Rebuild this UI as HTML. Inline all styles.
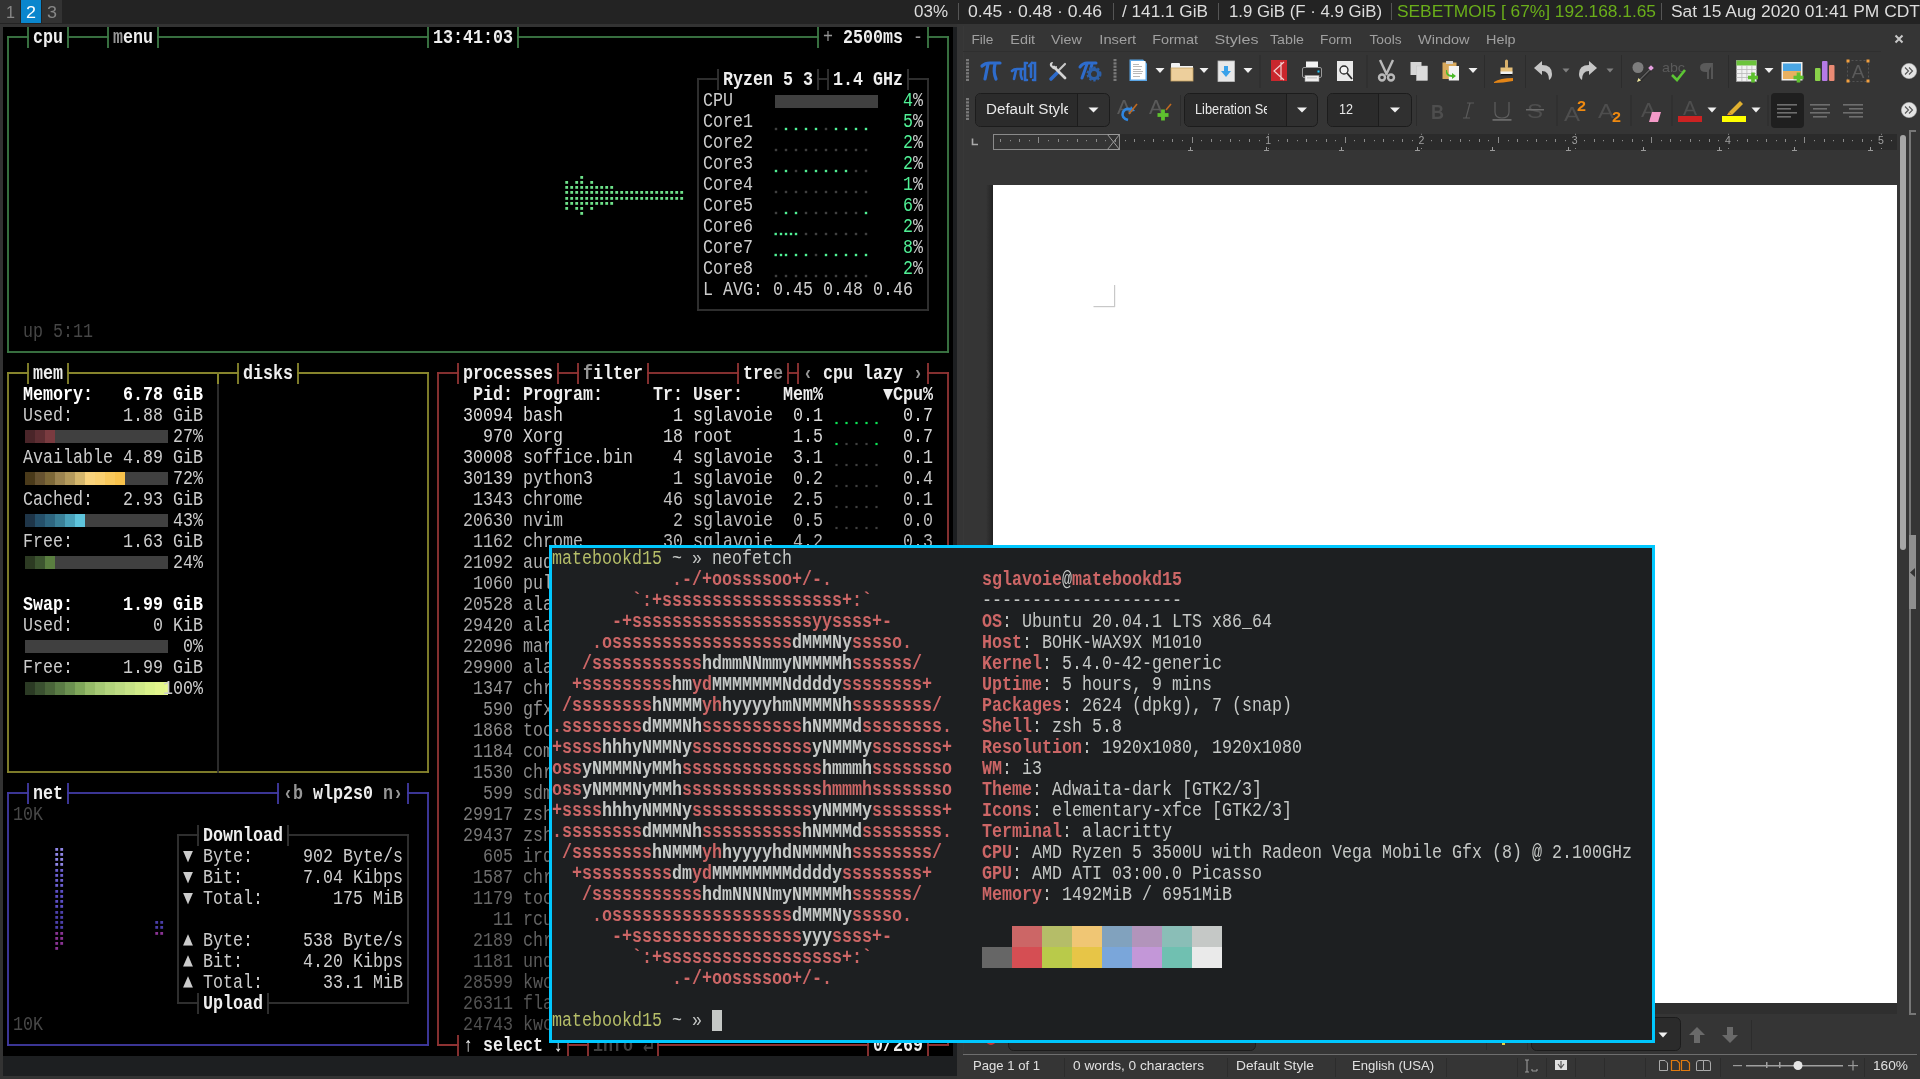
<!DOCTYPE html><html><head><meta charset="utf-8"><title>desktop</title><style>
html,body{margin:0;padding:0;background:#333;overflow:hidden;width:1920px;height:1079px}
svg{display:block;position:absolute;left:0;top:0;will-change:transform}
text{font-family:"Liberation Mono",monospace;white-space:pre}
.s{font-family:"Liberation Sans",sans-serif}
</style></head><body>
<svg width="1920" height="1079" viewBox="0 0 1920 1079">
<rect x="0" y="0" width="1920" height="1079" fill="#333333" />
<rect x="0" y="0" width="1920" height="24" fill="#232323" />
<rect x="0" y="0" width="20" height="23" fill="#333333" />
<rect x="21" y="0" width="20" height="23" fill="#0a86cd" />
<rect x="42" y="0" width="20" height="23" fill="#333333" />
<text class="s" x="6" y="18" fill="#888888" font-size="16" textLength="9" lengthAdjust="spacingAndGlyphs">1</text>
<text class="s" x="26" y="18" fill="#ffffff" font-size="16" textLength="10" lengthAdjust="spacingAndGlyphs">2</text>
<text class="s" x="47" y="18" fill="#888888" font-size="16" textLength="10" lengthAdjust="spacingAndGlyphs">3</text>
<text class="s" x="914" y="17" fill="#dddddd" font-size="16" textLength="34" lengthAdjust="spacingAndGlyphs">03%</text>
<text class="s" x="968" y="17" fill="#dddddd" font-size="16" textLength="134" lengthAdjust="spacingAndGlyphs">0.45 · 0.48 · 0.46</text>
<text class="s" x="1122" y="17" fill="#dddddd" font-size="16" textLength="86" lengthAdjust="spacingAndGlyphs">/ 141.1 GiB</text>
<text class="s" x="1229" y="17" fill="#dddddd" font-size="16" textLength="153" lengthAdjust="spacingAndGlyphs">1.9 GiB (F · 4.9 GiB)</text>
<text class="s" x="1397" y="17" fill="#6aae1a" font-size="16" textLength="259" lengthAdjust="spacingAndGlyphs">SEBETMOI5 [ 67%] 192.168.1.65</text>
<text class="s" x="1671" y="17" fill="#dddddd" font-size="16" textLength="249" lengthAdjust="spacingAndGlyphs">Sat 15 Aug 2020 01:41 PM CDT</text>
<rect x="958" y="3" width="1" height="17" fill="#555555" />
<rect x="1113" y="3" width="1" height="17" fill="#555555" />
<rect x="1218" y="3" width="1" height="17" fill="#555555" />
<rect x="1391" y="3" width="1" height="17" fill="#555555" />
<rect x="1661" y="3" width="1" height="17" fill="#555555" />
<rect x="3" y="27" width="954" height="1049" fill="#1d1f21" />
<rect x="3" y="27" width="950" height="1029" fill="#000000" />
<rect x="7.1" y="36.1" width="941.8" height="1.8" fill="#3d7b46" />
<rect x="7.1" y="351.1" width="941.8" height="1.8" fill="#3d7b46" />
<rect x="7.1" y="36.1" width="1.8" height="316.8" fill="#3d7b46" />
<rect x="947.1" y="36.1" width="1.8" height="316.8" fill="#3d7b46" />
<rect x="28.9" y="27" width="38.2" height="21" fill="#000" />
<rect x="27.1" y="27" width="1.8" height="21" fill="#3d7b46" />
<rect x="67.1" y="27" width="1.8" height="21" fill="#3d7b46" />
<text x="33" y="43" fill="#eeeeee" font-size="20" font-weight="bold" textLength="30" lengthAdjust="spacingAndGlyphs">cpu</text>
<rect x="108.9" y="27" width="48.2" height="21" fill="#000" />
<rect x="107.1" y="27" width="1.8" height="21" fill="#3d7b46" />
<rect x="157.1" y="27" width="1.8" height="21" fill="#3d7b46" />
<text x="113" y="43" fill="#969696" font-size="20" font-weight="bold" textLength="10" lengthAdjust="spacingAndGlyphs">m</text>
<text x="123" y="43" fill="#eeeeee" font-size="20" font-weight="bold" textLength="30" lengthAdjust="spacingAndGlyphs">enu</text>
<rect x="428.9" y="27" width="88.2" height="21" fill="#000" />
<rect x="427.1" y="27" width="1.8" height="21" fill="#3d7b46" />
<rect x="517.1" y="27" width="1.8" height="21" fill="#3d7b46" />
<text x="433" y="43" fill="#eeeeee" font-size="20" font-weight="bold" textLength="80" lengthAdjust="spacingAndGlyphs">13:41:03</text>
<rect x="818.9" y="27" width="108.2" height="21" fill="#000" />
<rect x="817.1" y="27" width="1.8" height="21" fill="#3d7b46" />
<rect x="927.1" y="27" width="1.8" height="21" fill="#3d7b46" />
<text x="823" y="43" fill="#969696" font-size="20" textLength="10" lengthAdjust="spacingAndGlyphs">+</text>
<text x="843" y="43" fill="#eeeeee" font-size="20" font-weight="bold" textLength="60" lengthAdjust="spacingAndGlyphs">2500ms</text>
<text x="913" y="43" fill="#969696" font-size="20" textLength="10" lengthAdjust="spacingAndGlyphs">-</text>
<text x="23" y="337" fill="#464646" font-size="20" textLength="20" lengthAdjust="spacingAndGlyphs">up</text>
<text x="53" y="337" fill="#464646" font-size="20" textLength="40" lengthAdjust="spacingAndGlyphs">5:11</text>
<rect x="580.3" y="176.0" width="2.8" height="2.8" fill="#6ee28a" />
<rect x="565.3" y="181.0" width="2.8" height="2.8" fill="#6ee28a" />
<rect x="575.3" y="181.0" width="2.8" height="2.8" fill="#6ee28a" />
<rect x="580.3" y="181.0" width="2.8" height="2.8" fill="#6ee28a" />
<rect x="590.3" y="181.0" width="2.8" height="2.8" fill="#6ee28a" />
<rect x="565.3" y="186.0" width="2.8" height="2.8" fill="#6ee28a" />
<rect x="570.3" y="186.0" width="2.8" height="2.8" fill="#6ee28a" />
<rect x="575.3" y="186.0" width="2.8" height="2.8" fill="#6ee28a" />
<rect x="580.3" y="186.0" width="2.8" height="2.8" fill="#6ee28a" />
<rect x="585.3" y="186.0" width="2.8" height="2.8" fill="#6ee28a" />
<rect x="590.3" y="186.0" width="2.8" height="2.8" fill="#6ee28a" />
<rect x="595.3" y="186.0" width="2.8" height="2.8" fill="#6ee28a" />
<rect x="600.3" y="186.0" width="2.8" height="2.8" fill="#6ee28a" />
<rect x="605.3" y="186.0" width="2.8" height="2.8" fill="#6ee28a" />
<rect x="610.3" y="186.0" width="2.8" height="2.8" fill="#6ee28a" />
<rect x="565.3" y="191.0" width="2.8" height="2.8" fill="#6ee28a" />
<rect x="570.3" y="191.0" width="2.8" height="2.8" fill="#6ee28a" />
<rect x="575.3" y="191.0" width="2.8" height="2.8" fill="#6ee28a" />
<rect x="580.3" y="191.0" width="2.8" height="2.8" fill="#6ee28a" />
<rect x="585.3" y="191.0" width="2.8" height="2.8" fill="#6ee28a" />
<rect x="590.3" y="191.0" width="2.8" height="2.8" fill="#6ee28a" />
<rect x="595.3" y="191.0" width="2.8" height="2.8" fill="#6ee28a" />
<rect x="600.3" y="191.0" width="2.8" height="2.8" fill="#6ee28a" />
<rect x="605.3" y="191.0" width="2.8" height="2.8" fill="#6ee28a" />
<rect x="610.3" y="191.0" width="2.8" height="2.8" fill="#6ee28a" />
<rect x="615.3" y="191.0" width="2.8" height="2.8" fill="#6ee28a" />
<rect x="620.3" y="191.0" width="2.8" height="2.8" fill="#6ee28a" />
<rect x="625.3" y="191.0" width="2.8" height="2.8" fill="#6ee28a" />
<rect x="630.3" y="191.0" width="2.8" height="2.8" fill="#6ee28a" />
<rect x="635.3" y="191.0" width="2.8" height="2.8" fill="#6ee28a" />
<rect x="640.3" y="191.0" width="2.8" height="2.8" fill="#6ee28a" />
<rect x="645.3" y="191.0" width="2.8" height="2.8" fill="#6ee28a" />
<rect x="650.3" y="191.0" width="2.8" height="2.8" fill="#6ee28a" />
<rect x="655.3" y="191.0" width="2.8" height="2.8" fill="#6ee28a" />
<rect x="660.3" y="191.0" width="2.8" height="2.8" fill="#6ee28a" />
<rect x="665.3" y="191.0" width="2.8" height="2.8" fill="#6ee28a" />
<rect x="670.3" y="191.0" width="2.8" height="2.8" fill="#6ee28a" />
<rect x="675.3" y="191.0" width="2.8" height="2.8" fill="#6ee28a" />
<rect x="680.3" y="191.0" width="2.8" height="2.8" fill="#6ee28a" />
<rect x="565.3" y="197.0" width="2.8" height="2.8" fill="#6ee28a" />
<rect x="570.3" y="197.0" width="2.8" height="2.8" fill="#6ee28a" />
<rect x="575.3" y="197.0" width="2.8" height="2.8" fill="#6ee28a" />
<rect x="580.3" y="197.0" width="2.8" height="2.8" fill="#6ee28a" />
<rect x="585.3" y="197.0" width="2.8" height="2.8" fill="#6ee28a" />
<rect x="590.3" y="197.0" width="2.8" height="2.8" fill="#6ee28a" />
<rect x="595.3" y="197.0" width="2.8" height="2.8" fill="#6ee28a" />
<rect x="600.3" y="197.0" width="2.8" height="2.8" fill="#6ee28a" />
<rect x="605.3" y="197.0" width="2.8" height="2.8" fill="#6ee28a" />
<rect x="610.3" y="197.0" width="2.8" height="2.8" fill="#6ee28a" />
<rect x="615.3" y="197.0" width="2.8" height="2.8" fill="#6ee28a" />
<rect x="620.3" y="197.0" width="2.8" height="2.8" fill="#6ee28a" />
<rect x="625.3" y="197.0" width="2.8" height="2.8" fill="#6ee28a" />
<rect x="630.3" y="197.0" width="2.8" height="2.8" fill="#6ee28a" />
<rect x="635.3" y="197.0" width="2.8" height="2.8" fill="#6ee28a" />
<rect x="640.3" y="197.0" width="2.8" height="2.8" fill="#6ee28a" />
<rect x="645.3" y="197.0" width="2.8" height="2.8" fill="#6ee28a" />
<rect x="650.3" y="197.0" width="2.8" height="2.8" fill="#6ee28a" />
<rect x="655.3" y="197.0" width="2.8" height="2.8" fill="#6ee28a" />
<rect x="660.3" y="197.0" width="2.8" height="2.8" fill="#6ee28a" />
<rect x="665.3" y="197.0" width="2.8" height="2.8" fill="#6ee28a" />
<rect x="670.3" y="197.0" width="2.8" height="2.8" fill="#6ee28a" />
<rect x="675.3" y="197.0" width="2.8" height="2.8" fill="#6ee28a" />
<rect x="680.3" y="197.0" width="2.8" height="2.8" fill="#6ee28a" />
<rect x="565.3" y="202.0" width="2.8" height="2.8" fill="#6ee28a" />
<rect x="570.3" y="202.0" width="2.8" height="2.8" fill="#6ee28a" />
<rect x="575.3" y="202.0" width="2.8" height="2.8" fill="#6ee28a" />
<rect x="580.3" y="202.0" width="2.8" height="2.8" fill="#6ee28a" />
<rect x="585.3" y="202.0" width="2.8" height="2.8" fill="#6ee28a" />
<rect x="590.3" y="202.0" width="2.8" height="2.8" fill="#6ee28a" />
<rect x="595.3" y="202.0" width="2.8" height="2.8" fill="#6ee28a" />
<rect x="600.3" y="202.0" width="2.8" height="2.8" fill="#6ee28a" />
<rect x="605.3" y="202.0" width="2.8" height="2.8" fill="#6ee28a" />
<rect x="610.3" y="202.0" width="2.8" height="2.8" fill="#6ee28a" />
<rect x="565.3" y="207.0" width="2.8" height="2.8" fill="#6ee28a" />
<rect x="575.3" y="207.0" width="2.8" height="2.8" fill="#6ee28a" />
<rect x="580.3" y="207.0" width="2.8" height="2.8" fill="#6ee28a" />
<rect x="590.3" y="207.0" width="2.8" height="2.8" fill="#6ee28a" />
<rect x="580.3" y="212.0" width="2.8" height="2.8" fill="#6ee28a" />
<rect x="697.1" y="78.1" width="231.8" height="1.8" fill="#333333" />
<rect x="697.1" y="309.1" width="231.8" height="1.8" fill="#333333" />
<rect x="697.1" y="78.1" width="1.8" height="232.8" fill="#333333" />
<rect x="927.1" y="78.1" width="1.8" height="232.8" fill="#333333" />
<rect x="718.9" y="69" width="98.2" height="21" fill="#000" />
<rect x="717.1" y="69" width="1.8" height="21" fill="#333333" />
<rect x="817.1" y="69" width="1.8" height="21" fill="#333333" />
<text x="723" y="85" fill="#eeeeee" font-size="20" font-weight="bold" textLength="50" lengthAdjust="spacingAndGlyphs">Ryzen</text>
<text x="783" y="85" fill="#eeeeee" font-size="20" font-weight="bold" textLength="10" lengthAdjust="spacingAndGlyphs">5</text>
<text x="803" y="85" fill="#eeeeee" font-size="20" font-weight="bold" textLength="10" lengthAdjust="spacingAndGlyphs">3</text>
<rect x="828.9" y="69" width="78.2" height="21" fill="#000" />
<rect x="827.1" y="69" width="1.8" height="21" fill="#333333" />
<rect x="907.1" y="69" width="1.8" height="21" fill="#333333" />
<text x="833" y="85" fill="#eeeeee" font-size="20" font-weight="bold" textLength="30" lengthAdjust="spacingAndGlyphs">1.4</text>
<text x="873" y="85" fill="#eeeeee" font-size="20" font-weight="bold" textLength="30" lengthAdjust="spacingAndGlyphs">GHz</text>
<text x="703" y="106" fill="#cccccc" font-size="20" textLength="30" lengthAdjust="spacingAndGlyphs">CPU</text>
<rect x="775" y="95" width="103" height="13" fill="#404040" />
<text x="903" y="106" fill="#50f095" font-size="20" textLength="10" lengthAdjust="spacingAndGlyphs">4</text>
<text x="913" y="106" fill="#cccccc" font-size="20" textLength="10" lengthAdjust="spacingAndGlyphs">%</text>
<text x="903" y="127" fill="#50f095" font-size="20" textLength="10" lengthAdjust="spacingAndGlyphs">5</text>
<text x="913" y="127" fill="#cccccc" font-size="20" textLength="10" lengthAdjust="spacingAndGlyphs">%</text>
<text x="903" y="148" fill="#50f095" font-size="20" textLength="10" lengthAdjust="spacingAndGlyphs">2</text>
<text x="913" y="148" fill="#cccccc" font-size="20" textLength="10" lengthAdjust="spacingAndGlyphs">%</text>
<text x="903" y="169" fill="#50f095" font-size="20" textLength="10" lengthAdjust="spacingAndGlyphs">2</text>
<text x="913" y="169" fill="#cccccc" font-size="20" textLength="10" lengthAdjust="spacingAndGlyphs">%</text>
<text x="903" y="190" fill="#50f095" font-size="20" textLength="10" lengthAdjust="spacingAndGlyphs">1</text>
<text x="913" y="190" fill="#cccccc" font-size="20" textLength="10" lengthAdjust="spacingAndGlyphs">%</text>
<text x="903" y="211" fill="#50f095" font-size="20" textLength="10" lengthAdjust="spacingAndGlyphs">6</text>
<text x="913" y="211" fill="#cccccc" font-size="20" textLength="10" lengthAdjust="spacingAndGlyphs">%</text>
<text x="903" y="232" fill="#50f095" font-size="20" textLength="10" lengthAdjust="spacingAndGlyphs">2</text>
<text x="913" y="232" fill="#cccccc" font-size="20" textLength="10" lengthAdjust="spacingAndGlyphs">%</text>
<text x="903" y="253" fill="#50f095" font-size="20" textLength="10" lengthAdjust="spacingAndGlyphs">8</text>
<text x="913" y="253" fill="#cccccc" font-size="20" textLength="10" lengthAdjust="spacingAndGlyphs">%</text>
<text x="903" y="274" fill="#50f095" font-size="20" textLength="10" lengthAdjust="spacingAndGlyphs">2</text>
<text x="913" y="274" fill="#cccccc" font-size="20" textLength="10" lengthAdjust="spacingAndGlyphs">%</text>
<text x="703" y="127" fill="#cccccc" font-size="20" textLength="50" lengthAdjust="spacingAndGlyphs">Core1</text>
<text x="703" y="148" fill="#cccccc" font-size="20" textLength="50" lengthAdjust="spacingAndGlyphs">Core2</text>
<text x="703" y="169" fill="#cccccc" font-size="20" textLength="50" lengthAdjust="spacingAndGlyphs">Core3</text>
<text x="703" y="190" fill="#cccccc" font-size="20" textLength="50" lengthAdjust="spacingAndGlyphs">Core4</text>
<text x="703" y="211" fill="#cccccc" font-size="20" textLength="50" lengthAdjust="spacingAndGlyphs">Core5</text>
<text x="703" y="232" fill="#cccccc" font-size="20" textLength="50" lengthAdjust="spacingAndGlyphs">Core6</text>
<text x="703" y="253" fill="#cccccc" font-size="20" textLength="50" lengthAdjust="spacingAndGlyphs">Core7</text>
<text x="703" y="274" fill="#cccccc" font-size="20" textLength="50" lengthAdjust="spacingAndGlyphs">Core8</text>
<text x="703" y="295" fill="#cccccc" font-size="20" textLength="10" lengthAdjust="spacingAndGlyphs">L</text>
<text x="723" y="295" fill="#cccccc" font-size="20" textLength="40" lengthAdjust="spacingAndGlyphs">AVG:</text>
<text x="773" y="295" fill="#cccccc" font-size="20" textLength="40" lengthAdjust="spacingAndGlyphs">0.45</text>
<text x="823" y="295" fill="#cccccc" font-size="20" textLength="40" lengthAdjust="spacingAndGlyphs">0.48</text>
<text x="873" y="295" fill="#cccccc" font-size="20" textLength="40" lengthAdjust="spacingAndGlyphs">0.46</text>
<rect x="774.8" y="127.8" width="2.4" height="2.4" fill="#404040" />
<rect x="784.8" y="127.8" width="2.4" height="2.4" fill="#50f095" />
<rect x="794.8" y="127.8" width="2.4" height="2.4" fill="#50f095" />
<rect x="804.8" y="127.8" width="2.4" height="2.4" fill="#50f095" />
<rect x="814.8" y="127.8" width="2.4" height="2.4" fill="#50f095" />
<rect x="824.8" y="127.8" width="2.4" height="2.4" fill="#404040" />
<rect x="834.8" y="127.8" width="2.4" height="2.4" fill="#50f095" />
<rect x="844.8" y="127.8" width="2.4" height="2.4" fill="#50f095" />
<rect x="854.8" y="127.8" width="2.4" height="2.4" fill="#50f095" />
<rect x="864.8" y="127.8" width="2.4" height="2.4" fill="#50f095" />
<rect x="774.8" y="148.8" width="2.4" height="2.4" fill="#404040" />
<rect x="784.8" y="148.8" width="2.4" height="2.4" fill="#404040" />
<rect x="794.8" y="148.8" width="2.4" height="2.4" fill="#404040" />
<rect x="804.8" y="148.8" width="2.4" height="2.4" fill="#404040" />
<rect x="814.8" y="148.8" width="2.4" height="2.4" fill="#404040" />
<rect x="824.8" y="148.8" width="2.4" height="2.4" fill="#404040" />
<rect x="834.8" y="148.8" width="2.4" height="2.4" fill="#404040" />
<rect x="844.8" y="148.8" width="2.4" height="2.4" fill="#404040" />
<rect x="854.8" y="148.8" width="2.4" height="2.4" fill="#404040" />
<rect x="864.8" y="148.8" width="2.4" height="2.4" fill="#404040" />
<rect x="774.8" y="169.8" width="2.4" height="2.4" fill="#50f095" />
<rect x="784.8" y="169.8" width="2.4" height="2.4" fill="#50f095" />
<rect x="794.8" y="169.8" width="2.4" height="2.4" fill="#404040" />
<rect x="804.8" y="169.8" width="2.4" height="2.4" fill="#50f095" />
<rect x="814.8" y="169.8" width="2.4" height="2.4" fill="#50f095" />
<rect x="824.8" y="169.8" width="2.4" height="2.4" fill="#50f095" />
<rect x="834.8" y="169.8" width="2.4" height="2.4" fill="#50f095" />
<rect x="844.8" y="169.8" width="2.4" height="2.4" fill="#50f095" />
<rect x="854.8" y="169.8" width="2.4" height="2.4" fill="#404040" />
<rect x="864.8" y="169.8" width="2.4" height="2.4" fill="#404040" />
<rect x="774.8" y="190.8" width="2.4" height="2.4" fill="#404040" />
<rect x="784.8" y="190.8" width="2.4" height="2.4" fill="#404040" />
<rect x="794.8" y="190.8" width="2.4" height="2.4" fill="#404040" />
<rect x="804.8" y="190.8" width="2.4" height="2.4" fill="#404040" />
<rect x="814.8" y="190.8" width="2.4" height="2.4" fill="#404040" />
<rect x="824.8" y="190.8" width="2.4" height="2.4" fill="#404040" />
<rect x="834.8" y="190.8" width="2.4" height="2.4" fill="#404040" />
<rect x="844.8" y="190.8" width="2.4" height="2.4" fill="#404040" />
<rect x="854.8" y="190.8" width="2.4" height="2.4" fill="#404040" />
<rect x="864.8" y="190.8" width="2.4" height="2.4" fill="#404040" />
<rect x="774.8" y="211.8" width="2.4" height="2.4" fill="#404040" />
<rect x="784.8" y="211.8" width="2.4" height="2.4" fill="#50f095" />
<rect x="794.8" y="211.8" width="2.4" height="2.4" fill="#50f095" />
<rect x="804.8" y="211.8" width="2.4" height="2.4" fill="#404040" />
<rect x="814.8" y="211.8" width="2.4" height="2.4" fill="#404040" />
<rect x="824.8" y="211.8" width="2.4" height="2.4" fill="#404040" />
<rect x="834.8" y="211.8" width="2.4" height="2.4" fill="#404040" />
<rect x="844.8" y="211.8" width="2.4" height="2.4" fill="#404040" />
<rect x="854.8" y="211.8" width="2.4" height="2.4" fill="#404040" />
<rect x="864.8" y="211.8" width="2.4" height="2.4" fill="#50f095" />
<rect x="774.8" y="274.8" width="2.4" height="2.4" fill="#404040" />
<rect x="784.8" y="274.8" width="2.4" height="2.4" fill="#404040" />
<rect x="794.8" y="274.8" width="2.4" height="2.4" fill="#404040" />
<rect x="804.8" y="274.8" width="2.4" height="2.4" fill="#404040" />
<rect x="814.8" y="274.8" width="2.4" height="2.4" fill="#404040" />
<rect x="824.8" y="274.8" width="2.4" height="2.4" fill="#404040" />
<rect x="834.8" y="274.8" width="2.4" height="2.4" fill="#404040" />
<rect x="844.8" y="274.8" width="2.4" height="2.4" fill="#404040" />
<rect x="854.8" y="274.8" width="2.4" height="2.4" fill="#404040" />
<rect x="864.8" y="274.8" width="2.4" height="2.4" fill="#404040" />
<rect x="774.5" y="232.8" width="2.4" height="2.4" fill="#50f095" />
<rect x="779.8" y="232.8" width="2.4" height="2.4" fill="#50f095" />
<rect x="784.8" y="232.8" width="2.4" height="2.4" fill="#50f095" />
<rect x="789.8" y="232.8" width="2.4" height="2.4" fill="#50f095" />
<rect x="794.8" y="232.8" width="2.4" height="2.4" fill="#50f095" />
<rect x="804.8" y="232.8" width="2.4" height="2.4" fill="#404040" />
<rect x="814.8" y="232.8" width="2.4" height="2.4" fill="#404040" />
<rect x="824.8" y="232.8" width="2.4" height="2.4" fill="#404040" />
<rect x="834.8" y="232.8" width="2.4" height="2.4" fill="#404040" />
<rect x="844.8" y="232.8" width="2.4" height="2.4" fill="#404040" />
<rect x="854.8" y="232.8" width="2.4" height="2.4" fill="#404040" />
<rect x="864.8" y="232.8" width="2.4" height="2.4" fill="#404040" />
<rect x="774.5" y="253.8" width="2.4" height="2.4" fill="#50f095" />
<rect x="779.8" y="253.8" width="2.4" height="2.4" fill="#50f095" />
<rect x="784.8" y="253.8" width="2.4" height="2.4" fill="#50f095" />
<rect x="794.8" y="253.8" width="2.4" height="2.4" fill="#50f095" />
<rect x="804.8" y="253.8" width="2.4" height="2.4" fill="#50f095" />
<rect x="814.8" y="253.8" width="2.4" height="2.4" fill="#404040" />
<rect x="824.8" y="253.8" width="2.4" height="2.4" fill="#50f095" />
<rect x="834.8" y="253.8" width="2.4" height="2.4" fill="#50f095" />
<rect x="844.8" y="253.8" width="2.4" height="2.4" fill="#50f095" />
<rect x="854.8" y="253.8" width="2.4" height="2.4" fill="#50f095" />
<rect x="864.8" y="253.8" width="2.4" height="2.4" fill="#50f095" />
<rect x="7.1" y="372.1" width="421.8" height="1.8" fill="#8a882e" />
<rect x="7.1" y="771.1" width="421.8" height="1.8" fill="#8a882e" />
<rect x="7.1" y="372.1" width="1.8" height="400.8" fill="#8a882e" />
<rect x="427.1" y="372.1" width="1.8" height="400.8" fill="#8a882e" />
<rect x="217.1" y="372.1" width="1.8" height="400.8" fill="#303030" />
<rect x="7.25" y="372.25" width="421.5" height="1.5" fill="#8a882e" />
<rect x="217.0" y="373.5" width="2" height="10.5" fill="#8a882e" />
<rect x="28.9" y="363" width="38.2" height="21" fill="#000" />
<rect x="27.1" y="363" width="1.8" height="21" fill="#8a882e" />
<rect x="67.1" y="363" width="1.8" height="21" fill="#8a882e" />
<text x="33" y="379" fill="#eeeeee" font-size="20" font-weight="bold" textLength="30" lengthAdjust="spacingAndGlyphs">mem</text>
<rect x="238.9" y="363" width="58.2" height="21" fill="#000" />
<rect x="237.1" y="363" width="1.8" height="21" fill="#8a882e" />
<rect x="297.1" y="363" width="1.8" height="21" fill="#8a882e" />
<text x="243" y="379" fill="#eeeeee" font-size="20" font-weight="bold" textLength="50" lengthAdjust="spacingAndGlyphs">disks</text>
<text x="23" y="400" fill="#ffffff" font-size="20" font-weight="bold" textLength="70" lengthAdjust="spacingAndGlyphs">Memory:</text>
<text x="123" y="400" fill="#ffffff" font-size="20" font-weight="bold" textLength="40" lengthAdjust="spacingAndGlyphs">6.78</text>
<text x="173" y="400" fill="#ffffff" font-size="20" font-weight="bold" textLength="30" lengthAdjust="spacingAndGlyphs">GiB</text>
<text x="23" y="421" fill="#cccccc" font-size="20" textLength="50" lengthAdjust="spacingAndGlyphs">Used:</text>
<text x="123" y="421" fill="#cccccc" font-size="20" textLength="40" lengthAdjust="spacingAndGlyphs">1.88</text>
<text x="173" y="421" fill="#cccccc" font-size="20" textLength="30" lengthAdjust="spacingAndGlyphs">GiB</text>
<text x="23" y="463" fill="#cccccc" font-size="20" textLength="90" lengthAdjust="spacingAndGlyphs">Available</text>
<text x="123" y="463" fill="#cccccc" font-size="20" textLength="40" lengthAdjust="spacingAndGlyphs">4.89</text>
<text x="173" y="463" fill="#cccccc" font-size="20" textLength="30" lengthAdjust="spacingAndGlyphs">GiB</text>
<text x="23" y="505" fill="#cccccc" font-size="20" textLength="70" lengthAdjust="spacingAndGlyphs">Cached:</text>
<text x="123" y="505" fill="#cccccc" font-size="20" textLength="40" lengthAdjust="spacingAndGlyphs">2.93</text>
<text x="173" y="505" fill="#cccccc" font-size="20" textLength="30" lengthAdjust="spacingAndGlyphs">GiB</text>
<text x="23" y="547" fill="#cccccc" font-size="20" textLength="50" lengthAdjust="spacingAndGlyphs">Free:</text>
<text x="123" y="547" fill="#cccccc" font-size="20" textLength="40" lengthAdjust="spacingAndGlyphs">1.63</text>
<text x="173" y="547" fill="#cccccc" font-size="20" textLength="30" lengthAdjust="spacingAndGlyphs">GiB</text>
<text x="23" y="610" fill="#ffffff" font-size="20" font-weight="bold" textLength="50" lengthAdjust="spacingAndGlyphs">Swap:</text>
<text x="123" y="610" fill="#ffffff" font-size="20" font-weight="bold" textLength="40" lengthAdjust="spacingAndGlyphs">1.99</text>
<text x="173" y="610" fill="#ffffff" font-size="20" font-weight="bold" textLength="30" lengthAdjust="spacingAndGlyphs">GiB</text>
<text x="23" y="631" fill="#cccccc" font-size="20" textLength="50" lengthAdjust="spacingAndGlyphs">Used:</text>
<text x="153" y="631" fill="#cccccc" font-size="20" textLength="10" lengthAdjust="spacingAndGlyphs">0</text>
<text x="173" y="631" fill="#cccccc" font-size="20" textLength="30" lengthAdjust="spacingAndGlyphs">KiB</text>
<text x="23" y="673" fill="#cccccc" font-size="20" textLength="50" lengthAdjust="spacingAndGlyphs">Free:</text>
<text x="123" y="673" fill="#cccccc" font-size="20" textLength="40" lengthAdjust="spacingAndGlyphs">1.99</text>
<text x="173" y="673" fill="#cccccc" font-size="20" textLength="30" lengthAdjust="spacingAndGlyphs">GiB</text>
<rect x="25" y="430" width="143" height="13" fill="#404040" />
<rect x="25" y="430" width="10" height="13" fill="#4a2529" />
<rect x="35" y="430" width="10" height="13" fill="#5e2e33" />
<rect x="45" y="430" width="10" height="13" fill="#7a3b40" />
<text x="173" y="442" fill="#cccccc" font-size="20" textLength="30" lengthAdjust="spacingAndGlyphs">27%</text>
<rect x="25" y="472" width="143" height="13" fill="#404040" />
<rect x="25" y="472" width="10" height="13" fill="#4a3a1a" />
<rect x="35" y="472" width="10" height="13" fill="#665230" />
<rect x="45" y="472" width="10" height="13" fill="#7d6838" />
<rect x="55" y="472" width="10" height="13" fill="#9c8450" />
<rect x="65" y="472" width="10" height="13" fill="#b49a5c" />
<rect x="75" y="472" width="10" height="13" fill="#d4b66c" />
<rect x="85" y="472" width="10" height="13" fill="#f8d27c" />
<rect x="95" y="472" width="10" height="13" fill="#f9cf70" />
<rect x="105" y="472" width="10" height="13" fill="#f8c85c" />
<rect x="115" y="472" width="10" height="13" fill="#f8c24c" />
<text x="173" y="484" fill="#cccccc" font-size="20" textLength="30" lengthAdjust="spacingAndGlyphs">72%</text>
<rect x="25" y="514" width="143" height="13" fill="#404040" />
<rect x="25" y="514" width="10" height="13" fill="#1e3548" />
<rect x="35" y="514" width="10" height="13" fill="#25506a" />
<rect x="45" y="514" width="10" height="13" fill="#2e6680" />
<rect x="55" y="514" width="10" height="13" fill="#3a8098" />
<rect x="65" y="514" width="10" height="13" fill="#4aa2bb" />
<rect x="75" y="514" width="10" height="13" fill="#5ec4dc" />
<text x="173" y="526" fill="#cccccc" font-size="20" textLength="30" lengthAdjust="spacingAndGlyphs">43%</text>
<rect x="25" y="556" width="143" height="13" fill="#404040" />
<rect x="25" y="556" width="10" height="13" fill="#2c3a22" />
<rect x="35" y="556" width="10" height="13" fill="#3d5530" />
<rect x="45" y="556" width="10" height="13" fill="#5a7e40" />
<text x="173" y="568" fill="#cccccc" font-size="20" textLength="30" lengthAdjust="spacingAndGlyphs">24%</text>
<rect x="25" y="640" width="143" height="13" fill="#404040" />
<text x="183" y="652" fill="#cccccc" font-size="20" textLength="20" lengthAdjust="spacingAndGlyphs">0%</text>
<rect x="25" y="682" width="143" height="13" fill="#404040" />
<rect x="25" y="682" width="10" height="13" fill="#2b3a24" />
<rect x="35" y="682" width="10" height="13" fill="#3a5030" />
<rect x="45" y="682" width="10" height="13" fill="#4a653a" />
<rect x="55" y="682" width="10" height="13" fill="#5a7b45" />
<rect x="65" y="682" width="10" height="13" fill="#6b9050" />
<rect x="75" y="682" width="10" height="13" fill="#7fa65a" />
<rect x="85" y="682" width="10" height="13" fill="#95ba68" />
<rect x="95" y="682" width="10" height="13" fill="#a5c874" />
<rect x="105" y="682" width="10" height="13" fill="#b2d37c" />
<rect x="115" y="682" width="10" height="13" fill="#bcda82" />
<rect x="125" y="682" width="10" height="13" fill="#c6e286" />
<rect x="135" y="682" width="10" height="13" fill="#d0ea88" />
<rect x="145" y="682" width="10" height="13" fill="#daf28a" />
<rect x="155" y="682" width="10" height="13" fill="#e2f58c" />
<rect x="165" y="682" width="3" height="13" fill="#e6f88e" />
<text x="163" y="694" fill="#cccccc" font-size="20" textLength="40" lengthAdjust="spacingAndGlyphs">100%</text>
<rect x="7.1" y="792.1" width="421.8" height="1.8" fill="#423ba5" />
<rect x="7.1" y="1044.1" width="421.8" height="1.8" fill="#423ba5" />
<rect x="7.1" y="792.1" width="1.8" height="253.8" fill="#423ba5" />
<rect x="427.1" y="792.1" width="1.8" height="253.8" fill="#423ba5" />
<rect x="28.9" y="783" width="38.2" height="21" fill="#000" />
<rect x="27.1" y="783" width="1.8" height="21" fill="#423ba5" />
<rect x="67.1" y="783" width="1.8" height="21" fill="#423ba5" />
<text x="33" y="799" fill="#eeeeee" font-size="20" font-weight="bold" textLength="30" lengthAdjust="spacingAndGlyphs">net</text>
<rect x="278.9" y="783" width="128.2" height="21" fill="#000" />
<rect x="277.1" y="783" width="1.8" height="21" fill="#423ba5" />
<rect x="407.1" y="783" width="1.8" height="21" fill="#423ba5" />
<text x="283" y="799" fill="#969696" font-size="20" font-weight="bold" textLength="10" lengthAdjust="spacingAndGlyphs">‹</text>
<text x="293" y="799" fill="#969696" font-size="20" font-weight="bold" textLength="10" lengthAdjust="spacingAndGlyphs">b</text>
<text x="313" y="799" fill="#eeeeee" font-size="20" font-weight="bold" textLength="60" lengthAdjust="spacingAndGlyphs">wlp2s0</text>
<text x="383" y="799" fill="#969696" font-size="20" font-weight="bold" textLength="10" lengthAdjust="spacingAndGlyphs">n</text>
<text x="393" y="799" fill="#969696" font-size="20" font-weight="bold" textLength="10" lengthAdjust="spacingAndGlyphs">›</text>
<text x="13" y="820" fill="#484848" font-size="20" textLength="30" lengthAdjust="spacingAndGlyphs">10K</text>
<text x="13" y="1030" fill="#484848" font-size="20" textLength="30" lengthAdjust="spacingAndGlyphs">10K</text>
<rect x="177.1" y="834.1" width="231.8" height="1.8" fill="#333333" />
<rect x="177.1" y="1002.1" width="231.8" height="1.8" fill="#333333" />
<rect x="177.1" y="834.1" width="1.8" height="169.8" fill="#333333" />
<rect x="407.1" y="834.1" width="1.8" height="169.8" fill="#333333" />
<rect x="198.9" y="825" width="88.2" height="21" fill="#000" />
<rect x="197.1" y="825" width="1.8" height="21" fill="#333333" />
<rect x="287.1" y="825" width="1.8" height="21" fill="#333333" />
<text x="203" y="841" fill="#eeeeee" font-size="20" font-weight="bold" textLength="80" lengthAdjust="spacingAndGlyphs">Download</text>
<rect x="198.9" y="993" width="68.2" height="21" fill="#000" />
<rect x="197.1" y="993" width="1.8" height="21" fill="#333333" />
<rect x="267.1" y="993" width="1.8" height="21" fill="#333333" />
<text x="203" y="1009" fill="#eeeeee" font-size="20" font-weight="bold" textLength="60" lengthAdjust="spacingAndGlyphs">Upload</text>
<text x="183" y="862" fill="#cccccc" font-size="20" textLength="10" lengthAdjust="spacingAndGlyphs">▼</text>
<text x="203" y="862" fill="#cccccc" font-size="20" textLength="50" lengthAdjust="spacingAndGlyphs">Byte:</text>
<text x="303" y="862" fill="#cccccc" font-size="20" textLength="30" lengthAdjust="spacingAndGlyphs">902</text>
<text x="343" y="862" fill="#cccccc" font-size="20" textLength="60" lengthAdjust="spacingAndGlyphs">Byte/s</text>
<text x="183" y="883" fill="#cccccc" font-size="20" textLength="10" lengthAdjust="spacingAndGlyphs">▼</text>
<text x="203" y="883" fill="#cccccc" font-size="20" textLength="40" lengthAdjust="spacingAndGlyphs">Bit:</text>
<text x="303" y="883" fill="#cccccc" font-size="20" textLength="40" lengthAdjust="spacingAndGlyphs">7.04</text>
<text x="353" y="883" fill="#cccccc" font-size="20" textLength="50" lengthAdjust="spacingAndGlyphs">Kibps</text>
<text x="183" y="904" fill="#cccccc" font-size="20" textLength="10" lengthAdjust="spacingAndGlyphs">▼</text>
<text x="203" y="904" fill="#cccccc" font-size="20" textLength="60" lengthAdjust="spacingAndGlyphs">Total:</text>
<text x="333" y="904" fill="#cccccc" font-size="20" textLength="30" lengthAdjust="spacingAndGlyphs">175</text>
<text x="373" y="904" fill="#cccccc" font-size="20" textLength="30" lengthAdjust="spacingAndGlyphs">MiB</text>
<text x="183" y="946" fill="#cccccc" font-size="20" textLength="10" lengthAdjust="spacingAndGlyphs">▲</text>
<text x="203" y="946" fill="#cccccc" font-size="20" textLength="50" lengthAdjust="spacingAndGlyphs">Byte:</text>
<text x="303" y="946" fill="#cccccc" font-size="20" textLength="30" lengthAdjust="spacingAndGlyphs">538</text>
<text x="343" y="946" fill="#cccccc" font-size="20" textLength="60" lengthAdjust="spacingAndGlyphs">Byte/s</text>
<text x="183" y="967" fill="#cccccc" font-size="20" textLength="10" lengthAdjust="spacingAndGlyphs">▲</text>
<text x="203" y="967" fill="#cccccc" font-size="20" textLength="40" lengthAdjust="spacingAndGlyphs">Bit:</text>
<text x="303" y="967" fill="#cccccc" font-size="20" textLength="40" lengthAdjust="spacingAndGlyphs">4.20</text>
<text x="353" y="967" fill="#cccccc" font-size="20" textLength="50" lengthAdjust="spacingAndGlyphs">Kibps</text>
<text x="183" y="988" fill="#cccccc" font-size="20" textLength="10" lengthAdjust="spacingAndGlyphs">▲</text>
<text x="203" y="988" fill="#cccccc" font-size="20" textLength="60" lengthAdjust="spacingAndGlyphs">Total:</text>
<text x="323" y="988" fill="#cccccc" font-size="20" textLength="40" lengthAdjust="spacingAndGlyphs">33.1</text>
<text x="373" y="988" fill="#cccccc" font-size="20" textLength="30" lengthAdjust="spacingAndGlyphs">MiB</text>
<rect x="55.3" y="848.0" width="2.8" height="2.8" fill="#8f86e6" />
<rect x="60.3" y="848.0" width="2.8" height="2.8" fill="#8f86e6" />
<rect x="55.3" y="853.0" width="2.8" height="2.8" fill="#8f86e6" />
<rect x="60.3" y="853.0" width="2.8" height="2.8" fill="#8f86e6" />
<rect x="55.3" y="858.0" width="2.8" height="2.8" fill="#8f86e6" />
<rect x="60.3" y="858.0" width="2.8" height="2.8" fill="#8f86e6" />
<rect x="55.3" y="863.0" width="2.8" height="2.8" fill="#8f86e6" />
<rect x="60.3" y="863.0" width="2.8" height="2.8" fill="#8f86e6" />
<rect x="55.3" y="869.0" width="2.8" height="2.8" fill="#6c5fd0" />
<rect x="60.3" y="869.0" width="2.8" height="2.8" fill="#6c5fd0" />
<rect x="55.3" y="874.0" width="2.8" height="2.8" fill="#6c5fd0" />
<rect x="60.3" y="874.0" width="2.8" height="2.8" fill="#6c5fd0" />
<rect x="55.3" y="879.0" width="2.8" height="2.8" fill="#6c5fd0" />
<rect x="60.3" y="879.0" width="2.8" height="2.8" fill="#6c5fd0" />
<rect x="55.3" y="884.0" width="2.8" height="2.8" fill="#6c5fd0" />
<rect x="60.3" y="884.0" width="2.8" height="2.8" fill="#6c5fd0" />
<rect x="55.3" y="890.0" width="2.8" height="2.8" fill="#5b4ec4" />
<rect x="60.3" y="890.0" width="2.8" height="2.8" fill="#5b4ec4" />
<rect x="55.3" y="895.0" width="2.8" height="2.8" fill="#5b4ec4" />
<rect x="60.3" y="895.0" width="2.8" height="2.8" fill="#5b4ec4" />
<rect x="55.3" y="900.0" width="2.8" height="2.8" fill="#5b4ec4" />
<rect x="60.3" y="900.0" width="2.8" height="2.8" fill="#5b4ec4" />
<rect x="55.3" y="905.0" width="2.8" height="2.8" fill="#5b4ec4" />
<rect x="60.3" y="905.0" width="2.8" height="2.8" fill="#5b4ec4" />
<rect x="55.3" y="911.0" width="2.8" height="2.8" fill="#4c40ac" />
<rect x="60.3" y="911.0" width="2.8" height="2.8" fill="#4c40ac" />
<rect x="55.3" y="916.0" width="2.8" height="2.8" fill="#4c40ac" />
<rect x="60.3" y="916.0" width="2.8" height="2.8" fill="#4c40ac" />
<rect x="55.3" y="921.0" width="2.8" height="2.8" fill="#4c40ac" />
<rect x="60.3" y="921.0" width="2.8" height="2.8" fill="#4c40ac" />
<rect x="55.3" y="926.0" width="2.8" height="2.8" fill="#4c40ac" />
<rect x="60.3" y="926.0" width="2.8" height="2.8" fill="#4c40ac" />
<rect x="55.3" y="932.0" width="2.8" height="2.8" fill="#8a3494" />
<rect x="60.3" y="932.0" width="2.8" height="2.8" fill="#8a3494" />
<rect x="55.3" y="937.0" width="2.8" height="2.8" fill="#8a3494" />
<rect x="60.3" y="937.0" width="2.8" height="2.8" fill="#8a3494" />
<rect x="55.3" y="942.0" width="2.8" height="2.8" fill="#8a3494" />
<rect x="60.3" y="942.0" width="2.8" height="2.8" fill="#8a3494" />
<rect x="55.3" y="947.0" width="2.8" height="2.8" fill="#8a3494" />
<rect x="155.3" y="921.0" width="2.8" height="2.8" fill="#4a3ea8" />
<rect x="160.3" y="921.0" width="2.8" height="2.8" fill="#4a3ea8" />
<rect x="155.3" y="926.0" width="2.8" height="2.8" fill="#4a3ea8" />
<rect x="160.3" y="926.0" width="2.8" height="2.8" fill="#4a3ea8" />
<rect x="155.3" y="932.0" width="2.8" height="2.8" fill="#8a3494" />
<rect x="160.3" y="932.0" width="2.8" height="2.8" fill="#8a3494" />
<rect x="437.1" y="372.1" width="511.8" height="1.8" fill="#923535" />
<rect x="437.1" y="1044.1" width="511.8" height="1.8" fill="#923535" />
<rect x="437.1" y="372.1" width="1.8" height="673.8" fill="#923535" />
<rect x="947.1" y="372.1" width="1.8" height="673.8" fill="#923535" />
<rect x="458.9" y="363" width="98.2" height="21" fill="#000" />
<rect x="457.1" y="363" width="1.8" height="21" fill="#923535" />
<rect x="557.1" y="363" width="1.8" height="21" fill="#923535" />
<text x="463" y="379" fill="#eeeeee" font-size="20" font-weight="bold" textLength="90" lengthAdjust="spacingAndGlyphs">processes</text>
<rect x="578.9" y="363" width="68.2" height="21" fill="#000" />
<rect x="577.1" y="363" width="1.8" height="21" fill="#923535" />
<rect x="647.1" y="363" width="1.8" height="21" fill="#923535" />
<text x="583" y="379" fill="#969696" font-size="20" font-weight="bold" textLength="10" lengthAdjust="spacingAndGlyphs">f</text>
<text x="593" y="379" fill="#eeeeee" font-size="20" font-weight="bold" textLength="50" lengthAdjust="spacingAndGlyphs">ilter</text>
<rect x="738.9" y="363" width="48.2" height="21" fill="#000" />
<rect x="737.1" y="363" width="1.8" height="21" fill="#923535" />
<rect x="787.1" y="363" width="1.8" height="21" fill="#923535" />
<text x="743" y="379" fill="#eeeeee" font-size="20" font-weight="bold" textLength="30" lengthAdjust="spacingAndGlyphs">tre</text>
<text x="773" y="379" fill="#969696" font-size="20" font-weight="bold" textLength="10" lengthAdjust="spacingAndGlyphs">e</text>
<rect x="798.9" y="363" width="128.2" height="21" fill="#000" />
<rect x="797.1" y="363" width="1.8" height="21" fill="#923535" />
<rect x="927.1" y="363" width="1.8" height="21" fill="#923535" />
<text x="803" y="379" fill="#969696" font-size="20" font-weight="bold" textLength="10" lengthAdjust="spacingAndGlyphs">‹</text>
<text x="823" y="379" fill="#eeeeee" font-size="20" font-weight="bold" textLength="30" lengthAdjust="spacingAndGlyphs">cpu</text>
<text x="863" y="379" fill="#eeeeee" font-size="20" font-weight="bold" textLength="40" lengthAdjust="spacingAndGlyphs">lazy</text>
<text x="913" y="379" fill="#969696" font-size="20" font-weight="bold" textLength="10" lengthAdjust="spacingAndGlyphs">›</text>
<text x="473" y="400" fill="#eeeeee" font-size="20" font-weight="bold" textLength="40" lengthAdjust="spacingAndGlyphs">Pid:</text>
<text x="523" y="400" fill="#eeeeee" font-size="20" font-weight="bold" textLength="80" lengthAdjust="spacingAndGlyphs">Program:</text>
<text x="653" y="400" fill="#eeeeee" font-size="20" font-weight="bold" textLength="30" lengthAdjust="spacingAndGlyphs">Tr:</text>
<text x="693" y="400" fill="#eeeeee" font-size="20" font-weight="bold" textLength="50" lengthAdjust="spacingAndGlyphs">User:</text>
<text x="783" y="400" fill="#eeeeee" font-size="20" font-weight="bold" textLength="40" lengthAdjust="spacingAndGlyphs">Mem%</text>
<text x="883" y="400" fill="#eeeeee" font-size="20" font-weight="bold" textLength="50" lengthAdjust="spacingAndGlyphs">▼Cpu%</text>
<text x="463" y="421" fill="#dddddd" font-size="20" textLength="50" lengthAdjust="spacingAndGlyphs">30094</text>
<text x="523" y="421" fill="#dddddd" font-size="20" textLength="40" lengthAdjust="spacingAndGlyphs">bash</text>
<text x="673" y="421" fill="#dddddd" font-size="20" textLength="10" lengthAdjust="spacingAndGlyphs">1</text>
<text x="693" y="421" fill="#dddddd" font-size="20" textLength="80" lengthAdjust="spacingAndGlyphs">sglavoie</text>
<text x="793" y="421" fill="#dddddd" font-size="20" textLength="30" lengthAdjust="spacingAndGlyphs">0.1</text>
<text x="903" y="421" fill="#dddddd" font-size="20" textLength="30" lengthAdjust="spacingAndGlyphs">0.7</text>
<text x="483" y="442" fill="#d4d4d4" font-size="20" textLength="30" lengthAdjust="spacingAndGlyphs">970</text>
<text x="523" y="442" fill="#d4d4d4" font-size="20" textLength="40" lengthAdjust="spacingAndGlyphs">Xorg</text>
<text x="663" y="442" fill="#d4d4d4" font-size="20" textLength="20" lengthAdjust="spacingAndGlyphs">18</text>
<text x="693" y="442" fill="#d4d4d4" font-size="20" textLength="40" lengthAdjust="spacingAndGlyphs">root</text>
<text x="793" y="442" fill="#d4d4d4" font-size="20" textLength="30" lengthAdjust="spacingAndGlyphs">1.5</text>
<text x="903" y="442" fill="#d4d4d4" font-size="20" textLength="30" lengthAdjust="spacingAndGlyphs">0.7</text>
<text x="463" y="463" fill="#cecece" font-size="20" textLength="50" lengthAdjust="spacingAndGlyphs">30008</text>
<text x="523" y="463" fill="#cecece" font-size="20" textLength="110" lengthAdjust="spacingAndGlyphs">soffice.bin</text>
<text x="673" y="463" fill="#cecece" font-size="20" textLength="10" lengthAdjust="spacingAndGlyphs">4</text>
<text x="693" y="463" fill="#cecece" font-size="20" textLength="80" lengthAdjust="spacingAndGlyphs">sglavoie</text>
<text x="793" y="463" fill="#cecece" font-size="20" textLength="30" lengthAdjust="spacingAndGlyphs">3.1</text>
<text x="903" y="463" fill="#cecece" font-size="20" textLength="30" lengthAdjust="spacingAndGlyphs">0.1</text>
<text x="463" y="484" fill="#c8c8c8" font-size="20" textLength="50" lengthAdjust="spacingAndGlyphs">30139</text>
<text x="523" y="484" fill="#c8c8c8" font-size="20" textLength="70" lengthAdjust="spacingAndGlyphs">python3</text>
<text x="673" y="484" fill="#c8c8c8" font-size="20" textLength="10" lengthAdjust="spacingAndGlyphs">1</text>
<text x="693" y="484" fill="#c8c8c8" font-size="20" textLength="80" lengthAdjust="spacingAndGlyphs">sglavoie</text>
<text x="793" y="484" fill="#c8c8c8" font-size="20" textLength="30" lengthAdjust="spacingAndGlyphs">0.2</text>
<text x="903" y="484" fill="#c8c8c8" font-size="20" textLength="30" lengthAdjust="spacingAndGlyphs">0.4</text>
<text x="473" y="505" fill="#c2c2c2" font-size="20" textLength="40" lengthAdjust="spacingAndGlyphs">1343</text>
<text x="523" y="505" fill="#c2c2c2" font-size="20" textLength="60" lengthAdjust="spacingAndGlyphs">chrome</text>
<text x="663" y="505" fill="#c2c2c2" font-size="20" textLength="20" lengthAdjust="spacingAndGlyphs">46</text>
<text x="693" y="505" fill="#c2c2c2" font-size="20" textLength="80" lengthAdjust="spacingAndGlyphs">sglavoie</text>
<text x="793" y="505" fill="#c2c2c2" font-size="20" textLength="30" lengthAdjust="spacingAndGlyphs">2.5</text>
<text x="903" y="505" fill="#c2c2c2" font-size="20" textLength="30" lengthAdjust="spacingAndGlyphs">0.1</text>
<text x="463" y="526" fill="#bdbdbd" font-size="20" textLength="50" lengthAdjust="spacingAndGlyphs">20630</text>
<text x="523" y="526" fill="#bdbdbd" font-size="20" textLength="40" lengthAdjust="spacingAndGlyphs">nvim</text>
<text x="673" y="526" fill="#bdbdbd" font-size="20" textLength="10" lengthAdjust="spacingAndGlyphs">2</text>
<text x="693" y="526" fill="#bdbdbd" font-size="20" textLength="80" lengthAdjust="spacingAndGlyphs">sglavoie</text>
<text x="793" y="526" fill="#bdbdbd" font-size="20" textLength="30" lengthAdjust="spacingAndGlyphs">0.5</text>
<text x="903" y="526" fill="#bdbdbd" font-size="20" textLength="30" lengthAdjust="spacingAndGlyphs">0.0</text>
<text x="473" y="547" fill="#b8b8b8" font-size="20" textLength="40" lengthAdjust="spacingAndGlyphs">1162</text>
<text x="523" y="547" fill="#b8b8b8" font-size="20" textLength="60" lengthAdjust="spacingAndGlyphs">chrome</text>
<text x="663" y="547" fill="#b8b8b8" font-size="20" textLength="20" lengthAdjust="spacingAndGlyphs">30</text>
<text x="693" y="547" fill="#b8b8b8" font-size="20" textLength="80" lengthAdjust="spacingAndGlyphs">sglavoie</text>
<text x="793" y="547" fill="#b8b8b8" font-size="20" textLength="30" lengthAdjust="spacingAndGlyphs">4.2</text>
<text x="903" y="547" fill="#b8b8b8" font-size="20" textLength="30" lengthAdjust="spacingAndGlyphs">0.3</text>
<text x="463" y="568" fill="#b2b2b2" font-size="20" textLength="50" lengthAdjust="spacingAndGlyphs">21092</text>
<text x="523" y="568" fill="#b2b2b2" font-size="20" textLength="90" lengthAdjust="spacingAndGlyphs">audacious</text>
<text x="473" y="589" fill="#adadad" font-size="20" textLength="40" lengthAdjust="spacingAndGlyphs">1060</text>
<text x="523" y="589" fill="#adadad" font-size="20" textLength="100" lengthAdjust="spacingAndGlyphs">pulseaudio</text>
<text x="463" y="610" fill="#a8a8a8" font-size="20" textLength="50" lengthAdjust="spacingAndGlyphs">20528</text>
<text x="523" y="610" fill="#a8a8a8" font-size="20" textLength="90" lengthAdjust="spacingAndGlyphs">alacritty</text>
<text x="463" y="631" fill="#a3a3a3" font-size="20" textLength="50" lengthAdjust="spacingAndGlyphs">29420</text>
<text x="523" y="631" fill="#a3a3a3" font-size="20" textLength="90" lengthAdjust="spacingAndGlyphs">alacritty</text>
<text x="463" y="652" fill="#9f9f9f" font-size="20" textLength="50" lengthAdjust="spacingAndGlyphs">22096</text>
<text x="523" y="652" fill="#9f9f9f" font-size="20" textLength="80" lengthAdjust="spacingAndGlyphs">mariadbd</text>
<text x="463" y="673" fill="#9a9a9a" font-size="20" textLength="50" lengthAdjust="spacingAndGlyphs">29900</text>
<text x="523" y="673" fill="#9a9a9a" font-size="20" textLength="90" lengthAdjust="spacingAndGlyphs">alacritty</text>
<text x="473" y="694" fill="#959595" font-size="20" textLength="40" lengthAdjust="spacingAndGlyphs">1347</text>
<text x="523" y="694" fill="#959595" font-size="20" textLength="60" lengthAdjust="spacingAndGlyphs">chrome</text>
<text x="483" y="715" fill="#919191" font-size="20" textLength="30" lengthAdjust="spacingAndGlyphs">590</text>
<text x="523" y="715" fill="#919191" font-size="20" textLength="30" lengthAdjust="spacingAndGlyphs">gfx</text>
<text x="473" y="736" fill="#8c8c8c" font-size="20" textLength="40" lengthAdjust="spacingAndGlyphs">1868</text>
<text x="523" y="736" fill="#8c8c8c" font-size="20" textLength="50" lengthAdjust="spacingAndGlyphs">tools</text>
<text x="473" y="757" fill="#878787" font-size="20" textLength="40" lengthAdjust="spacingAndGlyphs">1184</text>
<text x="523" y="757" fill="#878787" font-size="20" textLength="70" lengthAdjust="spacingAndGlyphs">compton</text>
<text x="473" y="778" fill="#838383" font-size="20" textLength="40" lengthAdjust="spacingAndGlyphs">1530</text>
<text x="523" y="778" fill="#838383" font-size="20" textLength="60" lengthAdjust="spacingAndGlyphs">chrome</text>
<text x="483" y="799" fill="#7e7e7e" font-size="20" textLength="30" lengthAdjust="spacingAndGlyphs">599</text>
<text x="523" y="799" fill="#7e7e7e" font-size="20" textLength="30" lengthAdjust="spacingAndGlyphs">sdm</text>
<text x="463" y="820" fill="#7a7a7a" font-size="20" textLength="50" lengthAdjust="spacingAndGlyphs">29917</text>
<text x="523" y="820" fill="#7a7a7a" font-size="20" textLength="30" lengthAdjust="spacingAndGlyphs">zsh</text>
<text x="463" y="841" fill="#767676" font-size="20" textLength="50" lengthAdjust="spacingAndGlyphs">29437</text>
<text x="523" y="841" fill="#767676" font-size="20" textLength="30" lengthAdjust="spacingAndGlyphs">zsh</text>
<text x="483" y="862" fill="#717171" font-size="20" textLength="30" lengthAdjust="spacingAndGlyphs">605</text>
<text x="523" y="862" fill="#717171" font-size="20" textLength="30" lengthAdjust="spacingAndGlyphs">irq</text>
<text x="473" y="883" fill="#6d6d6d" font-size="20" textLength="40" lengthAdjust="spacingAndGlyphs">1587</text>
<text x="523" y="883" fill="#6d6d6d" font-size="20" textLength="60" lengthAdjust="spacingAndGlyphs">chrome</text>
<text x="473" y="904" fill="#696969" font-size="20" textLength="40" lengthAdjust="spacingAndGlyphs">1179</text>
<text x="523" y="904" fill="#696969" font-size="20" textLength="50" lengthAdjust="spacingAndGlyphs">tools</text>
<text x="493" y="925" fill="#646464" font-size="20" textLength="20" lengthAdjust="spacingAndGlyphs">11</text>
<text x="523" y="925" fill="#646464" font-size="20" textLength="30" lengthAdjust="spacingAndGlyphs">rcu</text>
<text x="473" y="946" fill="#606060" font-size="20" textLength="40" lengthAdjust="spacingAndGlyphs">2189</text>
<text x="523" y="946" fill="#606060" font-size="20" textLength="60" lengthAdjust="spacingAndGlyphs">chrome</text>
<text x="473" y="967" fill="#5c5c5c" font-size="20" textLength="40" lengthAdjust="spacingAndGlyphs">1181</text>
<text x="523" y="967" fill="#5c5c5c" font-size="20" textLength="30" lengthAdjust="spacingAndGlyphs">und</text>
<text x="463" y="988" fill="#585858" font-size="20" textLength="50" lengthAdjust="spacingAndGlyphs">28599</text>
<text x="523" y="988" fill="#585858" font-size="20" textLength="70" lengthAdjust="spacingAndGlyphs">kworker</text>
<text x="463" y="1009" fill="#545454" font-size="20" textLength="50" lengthAdjust="spacingAndGlyphs">26311</text>
<text x="523" y="1009" fill="#545454" font-size="20" textLength="90" lengthAdjust="spacingAndGlyphs">flameshot</text>
<text x="463" y="1030" fill="#505050" font-size="20" textLength="50" lengthAdjust="spacingAndGlyphs">24743</text>
<text x="523" y="1030" fill="#505050" font-size="20" textLength="70" lengthAdjust="spacingAndGlyphs">kworker</text>
<rect x="835.4" y="421.9" width="2.2" height="2.2" fill="#0de756" />
<rect x="845.4" y="421.9" width="2.2" height="2.2" fill="#0de756" />
<rect x="855.4" y="421.9" width="2.2" height="2.2" fill="#0de756" />
<rect x="865.4" y="421.9" width="2.2" height="2.2" fill="#0de756" />
<rect x="875.4" y="421.9" width="2.2" height="2.2" fill="#0de756" />
<rect x="835.4" y="442.9" width="2.2" height="2.2" fill="#0de756" />
<rect x="845.4" y="442.9" width="2.2" height="2.2" fill="#404040" />
<rect x="855.4" y="442.9" width="2.2" height="2.2" fill="#404040" />
<rect x="865.4" y="442.9" width="2.2" height="2.2" fill="#404040" />
<rect x="875.4" y="442.9" width="2.2" height="2.2" fill="#0de756" />
<rect x="835.4" y="463.9" width="2.2" height="2.2" fill="#404040" />
<rect x="845.4" y="463.9" width="2.2" height="2.2" fill="#404040" />
<rect x="855.4" y="463.9" width="2.2" height="2.2" fill="#404040" />
<rect x="865.4" y="463.9" width="2.2" height="2.2" fill="#404040" />
<rect x="875.4" y="463.9" width="2.2" height="2.2" fill="#404040" />
<rect x="835.4" y="484.9" width="2.2" height="2.2" fill="#404040" />
<rect x="845.4" y="484.9" width="2.2" height="2.2" fill="#404040" />
<rect x="855.4" y="484.9" width="2.2" height="2.2" fill="#404040" />
<rect x="865.4" y="484.9" width="2.2" height="2.2" fill="#404040" />
<rect x="875.4" y="484.9" width="2.2" height="2.2" fill="#404040" />
<rect x="835.4" y="505.9" width="2.2" height="2.2" fill="#404040" />
<rect x="845.4" y="505.9" width="2.2" height="2.2" fill="#404040" />
<rect x="855.4" y="505.9" width="2.2" height="2.2" fill="#404040" />
<rect x="865.4" y="505.9" width="2.2" height="2.2" fill="#404040" />
<rect x="875.4" y="505.9" width="2.2" height="2.2" fill="#404040" />
<rect x="835.4" y="526.9" width="2.2" height="2.2" fill="#404040" />
<rect x="845.4" y="526.9" width="2.2" height="2.2" fill="#404040" />
<rect x="855.4" y="526.9" width="2.2" height="2.2" fill="#404040" />
<rect x="865.4" y="526.9" width="2.2" height="2.2" fill="#404040" />
<rect x="875.4" y="526.9" width="2.2" height="2.2" fill="#404040" />
<rect x="835.4" y="547.9" width="2.2" height="2.2" fill="#404040" />
<rect x="845.4" y="547.9" width="2.2" height="2.2" fill="#404040" />
<rect x="855.4" y="547.9" width="2.2" height="2.2" fill="#404040" />
<rect x="865.4" y="547.9" width="2.2" height="2.2" fill="#404040" />
<rect x="875.4" y="547.9" width="2.2" height="2.2" fill="#404040" />
<rect x="437.25" y="1044.25" width="511.5" height="1.5" fill="#923535" />
<rect x="458.9" y="1035" width="108.2" height="21" fill="#000" />
<rect x="457.1" y="1035" width="1.8" height="21" fill="#923535" />
<rect x="567.1" y="1035" width="1.8" height="21" fill="#923535" />
<text x="463" y="1051" fill="#eeeeee" font-size="20" font-weight="bold" textLength="10" lengthAdjust="spacingAndGlyphs">↑</text>
<text x="483" y="1051" fill="#eeeeee" font-size="20" font-weight="bold" textLength="60" lengthAdjust="spacingAndGlyphs">select</text>
<text x="553" y="1051" fill="#eeeeee" font-size="20" font-weight="bold" textLength="10" lengthAdjust="spacingAndGlyphs">↓</text>
<rect x="588.9" y="1035" width="68.2" height="21" fill="#000" />
<rect x="587.1" y="1035" width="1.8" height="21" fill="#923535" />
<rect x="657.1" y="1035" width="1.8" height="21" fill="#923535" />
<text x="593" y="1051" fill="#404040" font-size="20" font-weight="bold" textLength="40" lengthAdjust="spacingAndGlyphs">info</text>
<text x="643" y="1051" fill="#404040" font-size="20" font-weight="bold" textLength="10" lengthAdjust="spacingAndGlyphs">↵</text>
<rect x="868.9" y="1035" width="58.2" height="21" fill="#000" />
<rect x="867.1" y="1035" width="1.8" height="21" fill="#923535" />
<rect x="927.1" y="1035" width="1.8" height="21" fill="#923535" />
<text x="873" y="1051" fill="#eeeeee" font-size="20" font-weight="bold" textLength="50" lengthAdjust="spacingAndGlyphs">0/269</text>
<rect x="957" y="24" width="963" height="1055" fill="#353535" />
<rect x="963" y="26" width="1" height="1030" fill="#383838" />
<text class="s" x="971.4" y="43.8" fill="#a0a0a0" font-size="13.3" textLength="22.1" lengthAdjust="spacingAndGlyphs">File</text>
<text class="s" x="1010.3" y="43.8" fill="#a0a0a0" font-size="13.3" textLength="24.8" lengthAdjust="spacingAndGlyphs">Edit</text>
<text class="s" x="1051.1" y="43.8" fill="#a0a0a0" font-size="13.3" textLength="30.7" lengthAdjust="spacingAndGlyphs">View</text>
<text class="s" x="1099.3" y="43.8" fill="#a0a0a0" font-size="13.3" textLength="36.9" lengthAdjust="spacingAndGlyphs">Insert</text>
<text class="s" x="1152.2" y="43.8" fill="#a0a0a0" font-size="13.3" textLength="45.8" lengthAdjust="spacingAndGlyphs">Format</text>
<text class="s" x="1214.5" y="43.8" fill="#a0a0a0" font-size="13.3" textLength="44.0" lengthAdjust="spacingAndGlyphs">Styles</text>
<text class="s" x="1270" y="43.8" fill="#a0a0a0" font-size="13.3" textLength="34" lengthAdjust="spacingAndGlyphs">Table</text>
<text class="s" x="1320" y="43.8" fill="#a0a0a0" font-size="13.3" textLength="32" lengthAdjust="spacingAndGlyphs">Form</text>
<text class="s" x="1369.5" y="43.8" fill="#a0a0a0" font-size="13.3" textLength="32.1" lengthAdjust="spacingAndGlyphs">Tools</text>
<text class="s" x="1418" y="43.8" fill="#a0a0a0" font-size="13.3" textLength="51.5" lengthAdjust="spacingAndGlyphs">Window</text>
<text class="s" x="1486" y="43.8" fill="#a0a0a0" font-size="13.3" textLength="29.6" lengthAdjust="spacingAndGlyphs">Help</text>
<rect x="963" y="51" width="918" height="1" fill="#2f2f2f" />
<path d="M1895.5 35.5 L1902.5 42.5 M1902.5 35.5 L1895.5 42.5" stroke="#c8c8c8" stroke-width="2"/>
<rect x="966.0" y="59" width="3" height="2.2" fill="#7a7a7a" />
<rect x="966.0" y="62.3" width="3" height="2.2" fill="#7a7a7a" />
<rect x="966.0" y="65.6" width="3" height="2.2" fill="#7a7a7a" />
<rect x="966.0" y="68.89999999999999" width="3" height="2.2" fill="#7a7a7a" />
<rect x="966.0" y="72.19999999999999" width="3" height="2.2" fill="#7a7a7a" />
<rect x="966.0" y="75.49999999999999" width="3" height="2.2" fill="#7a7a7a" />
<rect x="966.0" y="78.79999999999998" width="3" height="2.2" fill="#7a7a7a" />
<g fill="none" stroke="#2e6ccc" stroke-width="3.2" stroke-linecap="round"><path d="M982 66 Q985 63 990 63 L1000 63"/><path d="M988 64 L985 79"/><path d="M995 64 Q993 72 996 79"/></g>
<g fill="none" stroke="#2e6ccc" stroke-width="2.6" stroke-linecap="round"><path d="M1012 71 Q1014 69 1017 69 L1024 69"/><path d="M1016 70 L1014 79"/><path d="M1021 70 Q1020 75 1022 79"/><path d="M1027 63 L1025 63 L1025 80 L1027 80"/><path d="M1033 63 L1035 63 L1035 80 L1033 80"/><path d="M1029 66 L1031 64 L1031 77"/></g>
<g stroke-linecap="round"><path d="M1065 64 L1058 71" stroke="#c8c8c8" stroke-width="2.2"/><path d="M1058 72 L1051 79" stroke="#2e6ccc" stroke-width="3.6"/><path d="M1054 67 L1065 78" stroke="#d4d4d4" stroke-width="2.8"/><path d="M1050 66 Q1049 62 1053 62 L1052 65 L1054 67 L1057 66 Q1057 70 1053 69 Z" fill="#d4d4d4"/></g>
<g fill="none" stroke="#2e6ccc" stroke-width="3" stroke-linecap="round"><path d="M1080 67 Q1083 63 1087 63 L1096 63"/><path d="M1087 64 L1082 78"/><path d="M1092 64 L1090 72"/></g>
<circle cx="1094" cy="74" r="4.6" fill="none" stroke="#2c5fa8" stroke-width="3.2"/><circle cx="1094" cy="74" r="6.6" fill="none" stroke="#2c5fa8" stroke-width="1.8" stroke-dasharray="2.4 1.9"/>
<rect x="1113.5" y="59" width="3" height="2.2" fill="#7a7a7a" />
<rect x="1113.5" y="62.3" width="3" height="2.2" fill="#7a7a7a" />
<rect x="1113.5" y="65.6" width="3" height="2.2" fill="#7a7a7a" />
<rect x="1113.5" y="68.89999999999999" width="3" height="2.2" fill="#7a7a7a" />
<rect x="1113.5" y="72.19999999999999" width="3" height="2.2" fill="#7a7a7a" />
<rect x="1113.5" y="75.49999999999999" width="3" height="2.2" fill="#7a7a7a" />
<rect x="1113.5" y="78.79999999999998" width="3" height="2.2" fill="#7a7a7a" />
<path d="M1129.5 59.5 L1143 59.5 L1147 63.5 L1147 81 L1129.5 81 Z" fill="#5aa6e6"/>
<rect x="1131" y="61" width="14.5" height="18.5" fill="#ffffff" />
<rect x="1133" y="64" width="6" height="0.8" fill="#a8a8a8" />
<rect x="1133" y="66" width="9" height="0.8" fill="#a8a8a8" />
<rect x="1133" y="69" width="8" height="0.8" fill="#a8a8a8" />
<rect x="1133" y="71" width="10" height="0.8" fill="#a8a8a8" />
<rect x="1133" y="73" width="9" height="0.8" fill="#a8a8a8" />
<rect x="1133" y="76" width="7" height="0.8" fill="#a8a8a8" />
<path d="M1155.5 68.0 L1164.5 68.0 L1160 73.0 Z" fill="#f0f0f0"/>
<rect x="1171" y="63" width="9" height="4" fill="#f2f2f2" rx="1"/>
<rect x="1171" y="66" width="22" height="4" fill="#f2f2f2" />
<rect x="1171" y="68" width="22" height="13" fill="#edcf9c" stroke="#c9a566" stroke-width="0.8"/>
<path d="M1199.5 68.0 L1208.5 68.0 L1204 73.0 Z" fill="#f0f0f0"/>
<rect x="1218" y="61" width="16.5" height="20.5" fill="#e8e8e8" stroke="#bdbdbd" stroke-width="0.8"/>
<path d="M1224 66 L1228 66 L1228 71 L1231 71 L1226 77 L1221 71 L1224 71 Z" fill="#3aa2ea"/>
<path d="M1243.5 68.0 L1252.5 68.0 L1248 73.0 Z" fill="#f0f0f0"/>
<rect x="1259.5" y="55" width="1" height="33" fill="#2c2c2c" />
<rect x="1271" y="60" width="16" height="21" fill="#c9272d" />
<path d="M1284 62 L1274 71 L1284 80 M1281 62 L1281 80" stroke="#f2d0d0" stroke-width="1.2" fill="none"/>
<rect x="1306" y="61.5" width="12" height="8" fill="#f2f2f2" />
<rect x="1302.5" y="67.5" width="19" height="10" fill="#2e2e2e" rx="1.5" stroke="#9a9a9a" stroke-width="1"/>
<rect x="1305" y="75.5" width="14" height="6" fill="#eeeeee" stroke="#9a9a9a" stroke-width="0.6"/>
<rect x="1307" y="77.5" width="10" height="0.8" fill="#aaaaaa" />
<rect x="1317.5" y="70.5" width="2" height="2" fill="#22ccff" />
<rect x="1337" y="61" width="16" height="20" fill="#e9e9e9" />
<circle cx="1344" cy="70" r="4" fill="#f4f4f4" stroke="#2a2a2a" stroke-width="1.3"/><path d="M1347 73 L1352 79" stroke="#2a2a2a" stroke-width="1.8"/>
<rect x="1366.5" y="55" width="1" height="33" fill="#2c2c2c" />
<g fill="none" stroke="#b9b9b9" stroke-width="2.4"><path d="M1380 60 L1387 75 M1393 60 L1386 75"/><circle cx="1382" cy="77.5" r="3"/><circle cx="1391" cy="77.5" r="3"/></g>
<rect x="1410.5" y="62" width="11" height="13" fill="#d6d6d6" />
<rect x="1416.5" y="66" width="11" height="14.5" fill="#dcdcdc" stroke="#c4c4c4" stroke-width="0.5"/>
<rect x="1442.5" y="62.5" width="14" height="16.5" fill="#d9a95c" />
<rect x="1446" y="61" width="7" height="3" fill="#d0d0d0" />
<rect x="1448.8" y="66" width="10.2" height="14.5" fill="#f4f4f4" />
<path d="M1447 70 Q1447 75 1452 75 L1452 73 L1456 76 L1452 79 L1452 77 Q1445 77 1446 70 Z" fill="#4cbb2a"/>
<path d="M1468.5 68.0 L1477.5 68.0 L1473 73.0 Z" fill="#f0f0f0"/>
<rect x="1484" y="55" width="1" height="33" fill="#2c2c2c" />
<rect x="1505" y="59.5" width="3" height="9" fill="#d9b06a" rx="1.5"/>
<rect x="1500.5" y="67.5" width="12" height="5" fill="#e6c07a" />
<rect x="1500.5" y="71.5" width="12" height="3" fill="#f0f0f0" />
<rect x="1500.5" y="74" width="12" height="1.3" fill="#111111" />
<path d="M1494 82 Q1500 78 1513 78 L1513 81 Q1503 83 1494 83 Z" fill="#e38517"/>
<rect x="1525" y="55" width="1" height="33" fill="#2c2c2c" />
<path d="M1534 68 L1542 61 L1542 65 Q1552 65 1552 74 Q1552 78 1549 80 Q1549 71 1542 71 L1542 75 Z" fill="#c6c6c6"/>
<path d="M1562.5 68.5 L1569.5 68.5 L1566 72.5 Z" fill="#808080"/>
<path d="M1597 68 L1589 61 L1589 65 Q1579 65 1579 74 Q1579 78 1582 80 Q1582 71 1589 71 L1589 75 Z" fill="#c6c6c6"/>
<path d="M1606.5 68.5 L1613.5 68.5 L1610 72.5 Z" fill="#808080"/>
<rect x="1621" y="55" width="1" height="33" fill="#2c2c2c" />
<circle cx="1638" cy="67.5" r="5.5" fill="#7d7d7d"/><path d="M1639 81 L1652 68" stroke="#2a2a2a" stroke-width="3.4"/><path d="M1640 79.5 L1651 68.5" stroke="#606060" stroke-width="1.4"/><rect x="1649" y="66" width="4" height="4" fill="#e6a0e0" transform="rotate(45 1651 68)"/><path d="M1637 82 L1638.5 78 L1641 80.5 Z" fill="#f0e8a0"/>
<text class="s" x="1662" y="72" fill="#5a5a5a" font-size="13" textLength="23" lengthAdjust="spacingAndGlyphs">abc</text>
<path d="M1672 75 L1677 80 L1685 70" stroke="#5cc634" stroke-width="2.6" fill="none"/>
<path d="M1708 63 L1708 79 M1712 63 L1712 79" stroke="#5a5a5a" stroke-width="1.8"/><path d="M1713 63 L1706 63 Q1700 63 1700 67.5 Q1700 72 1706 72 L1708 72 Z" fill="#5a5a5a"/>
<rect x="1728" y="55" width="1" height="33" fill="#2c2c2c" />
<rect x="1736.5" y="60.5" width="20" height="21" fill="#f2f2f2" stroke="#9c9c9c" stroke-width="0.8"/>
<rect x="1736.5" y="60.5" width="20" height="5" fill="#6cc43c" />
<rect x="1741.5" y="65" width="0.8" height="16" fill="#b8b8b8" />
<rect x="1746.5" y="65" width="0.8" height="16" fill="#b8b8b8" />
<rect x="1751.5" y="65" width="0.8" height="16" fill="#b8b8b8" />
<rect x="1736.5" y="69" width="20" height="0.8" fill="#b8b8b8" />
<rect x="1736.5" y="73" width="20" height="0.8" fill="#b8b8b8" />
<rect x="1736.5" y="77" width="20" height="0.8" fill="#b8b8b8" />
<rect x="1751.2" y="72.5" width="3.6" height="10" fill="#5ec12e" />
<rect x="1748.0" y="75.7" width="10" height="3.6" fill="#5ec12e" />
<path d="M1764.5 68.0 L1773.5 68.0 L1769 73.0 Z" fill="#f0f0f0"/>
<rect x="1781.5" y="62" width="21" height="18.5" fill="#f0f0f0" />
<rect x="1783" y="63.5" width="18" height="8" fill="#4aa6e4" />
<rect x="1783" y="71" width="18" height="8" fill="#e8b060" />
<rect x="1796.7" y="72.5" width="3.6" height="10" fill="#5ec12e" />
<rect x="1793.5" y="75.7" width="10" height="3.6" fill="#5ec12e" />
<rect x="1815" y="68" width="5.5" height="13" fill="#8ad24a" rx="1"/>
<rect x="1822" y="61" width="5.5" height="20" fill="#b57ae6" rx="1"/>
<rect x="1829" y="65" width="5.5" height="16" fill="#ea8a74" rx="1"/>
<rect x="1847.5" y="60.5" width="21" height="21" fill="none" stroke="#5a5a5a" stroke-width="0.8" stroke-dasharray="2 2"/>
<text class="s" x="1858" y="78" fill="#5a5a5a" font-size="19" text-anchor="middle">A</text>
<rect x="1846.5" y="59.5" width="3" height="3" fill="#f2a040" />
<rect x="1866.5" y="59.5" width="3" height="3" fill="#f2a040" />
<rect x="1846.5" y="79.5" width="3" height="3" fill="#f2a040" />
<rect x="1866.5" y="79.5" width="3" height="3" fill="#f2a040" />
<circle cx="1909" cy="71" r="7.6" fill="#e4e4e4" stroke="#bdbdbd" stroke-width="0.6"/><path d="M1905 67.5 L1908.5 71 L1905 74.5 M1909 67.5 L1912.5 71 L1909 74.5" stroke="#555" stroke-width="1.1" fill="none"/>
<circle cx="1909" cy="110" r="7.6" fill="#e4e4e4" stroke="#bdbdbd" stroke-width="0.6"/><path d="M1905 106.5 L1908.5 110 L1905 113.5 M1909 106.5 L1912.5 110 L1909 113.5" stroke="#555" stroke-width="1.1" fill="none"/>
<rect x="966.0" y="98" width="3" height="2.2" fill="#7a7a7a" />
<rect x="966.0" y="101.3" width="3" height="2.2" fill="#7a7a7a" />
<rect x="966.0" y="104.6" width="3" height="2.2" fill="#7a7a7a" />
<rect x="966.0" y="107.89999999999999" width="3" height="2.2" fill="#7a7a7a" />
<rect x="966.0" y="111.19999999999999" width="3" height="2.2" fill="#7a7a7a" />
<rect x="966.0" y="114.49999999999999" width="3" height="2.2" fill="#7a7a7a" />
<rect x="966.0" y="117.79999999999998" width="3" height="2.2" fill="#7a7a7a" />
<rect x="975.5" y="93.5" width="134" height="33" rx="5" fill="#303030" stroke="#1c1c1c" stroke-width="1"/>
<rect x="976" y="94" width="101" height="32" fill="#2b2b2b" rx="4"/>
<rect x="1073" y="94" width="4" height="32" fill="#2b2b2b" />
<rect x="1077" y="94" width="1" height="32" fill="#1c1c1c" />
<path d="M1088.5 107.5 L1098.5 107.5 L1093.5 112.5 Z" fill="#f0f0f0"/>
<svg x="980" y="94" width="88" height="32"><text class="s" x="6" y="20" fill="#e8e8e8" font-size="14" textLength="86" lengthAdjust="spacingAndGlyphs">Default Style</text></svg>
<text class="s" x="1117" y="114" fill="#5a5a5a" font-size="21" textLength="14" lengthAdjust="spacingAndGlyphs">A</text>
<path d="M1128 120 Q1121 118 1123 112 Q1126 107 1132 110" stroke="#2f86e0" stroke-width="2.6" fill="none"/><path d="M1131 106 L1135 111 L1129 112 Z" fill="#2f86e0"/><path d="M1129 114 L1137 104" stroke="#c06a20" stroke-width="1.6"/>
<text class="s" x="1149" y="114" fill="#5a5a5a" font-size="21" textLength="14" lengthAdjust="spacingAndGlyphs">A</text>
<rect x="1161.1" y="109.5" width="3.8" height="11" fill="#5ec12e" />
<rect x="1157.5" y="113.1" width="11" height="3.8" fill="#5ec12e" />
<path d="M1166 110 L1171 104" stroke="#c06a20" stroke-width="1.6"/>
<rect x="1180" y="95" width="1" height="31" fill="#2c2c2c" />
<rect x="1184.5" y="93.5" width="133" height="33" rx="5" fill="#303030" stroke="#1c1c1c" stroke-width="1"/>
<rect x="1185" y="94" width="101" height="32" fill="#2b2b2b" rx="4"/>
<rect x="1282" y="94" width="4" height="32" fill="#2b2b2b" />
<rect x="1286" y="94" width="1" height="32" fill="#1c1c1c" />
<path d="M1297.0 107.5 L1307.0 107.5 L1302.0 112.5 Z" fill="#f0f0f0"/>
<svg x="1190" y="94" width="77" height="32"><text class="s" x="5" y="20" fill="#e8e8e8" font-size="14" textLength="86" lengthAdjust="spacingAndGlyphs">Liberation Serif</text></svg>
<rect x="1327.5" y="93.5" width="84" height="33" rx="5" fill="#303030" stroke="#1c1c1c" stroke-width="1"/>
<rect x="1328" y="94" width="50" height="32" fill="#2b2b2b" rx="4"/>
<rect x="1374" y="94" width="4" height="32" fill="#2b2b2b" />
<rect x="1378" y="94" width="1" height="32" fill="#1c1c1c" />
<path d="M1390.0 107.5 L1400.0 107.5 L1395.0 112.5 Z" fill="#f0f0f0"/>
<text class="s" x="1339" y="114" fill="#e8e8e8" font-size="14" textLength="14" lengthAdjust="spacingAndGlyphs">12</text>
<rect x="1416" y="95" width="1" height="31" fill="#2c2c2c" />
<text class="s" x="1431" y="119" fill="#4e4e4e" font-size="20" textLength="13" lengthAdjust="spacingAndGlyphs" font-weight="bold">B</text>
<path d="M1470 103 L1466 118 M1467 103 L1474 103 M1463 118 L1470 118" stroke="#5a5a5a" stroke-width="1.2" fill="none"/>
<path d="M1495 102 L1495 112 Q1495 118 1502 118 Q1509 118 1509 112 L1509 102" stroke="#5e5e5e" stroke-width="1.2" fill="none"/>
<rect x="1492.5" y="119" width="19" height="1.8" fill="#6a6a6a" />
<text class="s" x="1527" y="118" fill="#4e4e4e" font-size="20" textLength="16" lengthAdjust="spacingAndGlyphs">S</text>
<rect x="1526" y="109" width="18" height="1.5" fill="#6a6a6a" />
<rect x="1556.5" y="95" width="1" height="31" fill="#2c2c2c" />
<text class="s" x="1564" y="121" fill="#4e4e4e" font-size="20" textLength="16" lengthAdjust="spacingAndGlyphs">A</text>
<text class="s" x="1577" y="111" fill="#f08a10" font-size="14" textLength="9" lengthAdjust="spacingAndGlyphs" font-weight="bold">2</text>
<text class="s" x="1598" y="118" fill="#4e4e4e" font-size="20" textLength="16" lengthAdjust="spacingAndGlyphs">A</text>
<text class="s" x="1612" y="122" fill="#f08a10" font-size="14" textLength="9" lengthAdjust="spacingAndGlyphs" font-weight="bold">2</text>
<rect x="1630.5" y="95" width="1" height="31" fill="#2c2c2c" />
<text class="s" x="1641" y="117" fill="#4e4e4e" font-size="20" textLength="15" lengthAdjust="spacingAndGlyphs">A</text>
<path d="M1652 112 L1661 112 L1658 122 L1649 122 Z" fill="#f49ac8"/>
<rect x="1671.5" y="95" width="1" height="31" fill="#2c2c2c" />
<text class="s" x="1683" y="115" fill="#4e4e4e" font-size="20" textLength="14" lengthAdjust="spacingAndGlyphs">A</text>
<rect x="1678" y="116" width="24" height="6" fill="#cc2222" />
<path d="M1707.5 107.5 L1716.5 107.5 L1712 112.5 Z" fill="#f0f0f0"/>
<path d="M1729 112 L1740 101 L1743 104 L1732 115 Z" fill="#e0b030"/><path d="M1727 115 L1729 112 L1732 115 Z" fill="#f0a020"/>
<rect x="1722" y="116" width="24" height="6" fill="#ffff00" />
<path d="M1751.5 107.5 L1760.5 107.5 L1756 112.5 Z" fill="#f0f0f0"/>
<rect x="1767.5" y="95" width="1" height="31" fill="#2c2c2c" />
<rect x="1771" y="93" width="33" height="35" rx="4" fill="#1f1f1f"/>
<rect x="1777" y="104" width="20" height="1.6" fill="#6e6e6e" />
<rect x="1777" y="108" width="14" height="1.6" fill="#6e6e6e" />
<rect x="1777" y="112" width="20" height="1.6" fill="#6e6e6e" />
<rect x="1777" y="116" width="14" height="1.6" fill="#6e6e6e" />
<rect x="1810.0" y="104" width="20" height="1.6" fill="#6e6e6e" />
<rect x="1813.0" y="108" width="14" height="1.6" fill="#6e6e6e" />
<rect x="1810.0" y="112" width="20" height="1.6" fill="#6e6e6e" />
<rect x="1813.0" y="116" width="14" height="1.6" fill="#6e6e6e" />
<rect x="1843" y="104" width="20" height="1.6" fill="#6e6e6e" />
<rect x="1849" y="108" width="14" height="1.6" fill="#6e6e6e" />
<rect x="1843" y="112" width="20" height="1.6" fill="#6e6e6e" />
<rect x="1849" y="116" width="14" height="1.6" fill="#6e6e6e" />
<text class="s" x="0" y="0"></text>
<path d="M972.5 138.5 L972.5 144.5 L978 144.5" stroke="#aaaaaa" stroke-width="1.6" fill="none"/>
<rect x="1120" y="134" width="777" height="16" fill="#2b2b2b" />
<rect x="993.5" y="134.5" width="126" height="15" fill="none" stroke="#8a8a8a" stroke-width="1"/>
<rect x="1000" y="139" width="1" height="3" fill="#8a8a8a" />
<rect x="1010" y="140" width="1" height="1.2" fill="#8a8a8a" />
<rect x="1019" y="139" width="1" height="3" fill="#8a8a8a" />
<rect x="1029" y="140" width="1" height="1.2" fill="#8a8a8a" />
<rect x="1038" y="137" width="1" height="6" fill="#8a8a8a" />
<rect x="1048" y="140" width="1" height="1.2" fill="#8a8a8a" />
<rect x="1058" y="139" width="1" height="3" fill="#8a8a8a" />
<rect x="1067" y="140" width="1" height="1.2" fill="#8a8a8a" />
<rect x="1077" y="139" width="1" height="3" fill="#8a8a8a" />
<rect x="1086" y="140" width="1" height="1.2" fill="#8a8a8a" />
<rect x="1096" y="139" width="1" height="3" fill="#8a8a8a" />
<rect x="1105" y="140" width="1" height="1.2" fill="#8a8a8a" />
<rect x="1115" y="139" width="1" height="3" fill="#8a8a8a" />
<rect x="1125" y="140" width="1" height="1.2" fill="#8a8a8a" />
<rect x="1134" y="139" width="1" height="3" fill="#8a8a8a" />
<rect x="1144" y="140" width="1" height="1.2" fill="#8a8a8a" />
<rect x="1153" y="139" width="1" height="3" fill="#8a8a8a" />
<rect x="1163" y="140" width="1" height="1.2" fill="#8a8a8a" />
<rect x="1172" y="139" width="1" height="3" fill="#8a8a8a" />
<rect x="1182" y="140" width="1" height="1.2" fill="#8a8a8a" />
<rect x="1192" y="137" width="1" height="6" fill="#8a8a8a" />
<rect x="1201" y="140" width="1" height="1.2" fill="#8a8a8a" />
<rect x="1211" y="139" width="1" height="3" fill="#8a8a8a" />
<rect x="1220" y="140" width="1" height="1.2" fill="#8a8a8a" />
<rect x="1230" y="139" width="1" height="3" fill="#8a8a8a" />
<rect x="1239" y="140" width="1" height="1.2" fill="#8a8a8a" />
<rect x="1249" y="139" width="1" height="3" fill="#8a8a8a" />
<rect x="1259" y="140" width="1" height="1.2" fill="#8a8a8a" />
<text class="s" x="1268.2" y="144.3" fill="#a0a0a0" font-size="10.5" text-anchor="middle">1</text>
<rect x="1268" y="133.8" width="1" height="1" fill="#8a8a8a" />
<rect x="1268" y="148" width="1" height="1" fill="#8a8a8a" />
<rect x="1278" y="140" width="1" height="1.2" fill="#8a8a8a" />
<rect x="1287" y="139" width="1" height="3" fill="#8a8a8a" />
<rect x="1297" y="140" width="1" height="1.2" fill="#8a8a8a" />
<rect x="1306" y="139" width="1" height="3" fill="#8a8a8a" />
<rect x="1316" y="140" width="1" height="1.2" fill="#8a8a8a" />
<rect x="1326" y="139" width="1" height="3" fill="#8a8a8a" />
<rect x="1335" y="140" width="1" height="1.2" fill="#8a8a8a" />
<rect x="1345" y="137" width="1" height="6" fill="#8a8a8a" />
<rect x="1354" y="140" width="1" height="1.2" fill="#8a8a8a" />
<rect x="1364" y="139" width="1" height="3" fill="#8a8a8a" />
<rect x="1374" y="140" width="1" height="1.2" fill="#8a8a8a" />
<rect x="1383" y="139" width="1" height="3" fill="#8a8a8a" />
<rect x="1393" y="140" width="1" height="1.2" fill="#8a8a8a" />
<rect x="1402" y="139" width="1" height="3" fill="#8a8a8a" />
<rect x="1412" y="140" width="1" height="1.2" fill="#8a8a8a" />
<text class="s" x="1421.4" y="144.3" fill="#a0a0a0" font-size="10.5" text-anchor="middle">2</text>
<rect x="1421" y="133.8" width="1" height="1" fill="#8a8a8a" />
<rect x="1421" y="148" width="1" height="1" fill="#8a8a8a" />
<rect x="1431" y="140" width="1" height="1.2" fill="#8a8a8a" />
<rect x="1441" y="139" width="1" height="3" fill="#8a8a8a" />
<rect x="1450" y="140" width="1" height="1.2" fill="#8a8a8a" />
<rect x="1460" y="139" width="1" height="3" fill="#8a8a8a" />
<rect x="1469" y="140" width="1" height="1.2" fill="#8a8a8a" />
<rect x="1479" y="139" width="1" height="3" fill="#8a8a8a" />
<rect x="1488" y="140" width="1" height="1.2" fill="#8a8a8a" />
<rect x="1498" y="137" width="1" height="6" fill="#8a8a8a" />
<rect x="1508" y="140" width="1" height="1.2" fill="#8a8a8a" />
<rect x="1517" y="139" width="1" height="3" fill="#8a8a8a" />
<rect x="1527" y="140" width="1" height="1.2" fill="#8a8a8a" />
<rect x="1536" y="139" width="1" height="3" fill="#8a8a8a" />
<rect x="1546" y="140" width="1" height="1.2" fill="#8a8a8a" />
<rect x="1555" y="139" width="1" height="3" fill="#8a8a8a" />
<rect x="1565" y="140" width="1" height="1.2" fill="#8a8a8a" />
<text class="s" x="1574.6" y="144.3" fill="#a0a0a0" font-size="10.5" text-anchor="middle">3</text>
<rect x="1575" y="133.8" width="1" height="1" fill="#8a8a8a" />
<rect x="1575" y="148" width="1" height="1" fill="#8a8a8a" />
<rect x="1584" y="140" width="1" height="1.2" fill="#8a8a8a" />
<rect x="1594" y="139" width="1" height="3" fill="#8a8a8a" />
<rect x="1603" y="140" width="1" height="1.2" fill="#8a8a8a" />
<rect x="1613" y="139" width="1" height="3" fill="#8a8a8a" />
<rect x="1622" y="140" width="1" height="1.2" fill="#8a8a8a" />
<rect x="1632" y="139" width="1" height="3" fill="#8a8a8a" />
<rect x="1642" y="140" width="1" height="1.2" fill="#8a8a8a" />
<rect x="1651" y="137" width="1" height="6" fill="#8a8a8a" />
<rect x="1661" y="140" width="1" height="1.2" fill="#8a8a8a" />
<rect x="1670" y="139" width="1" height="3" fill="#8a8a8a" />
<rect x="1680" y="140" width="1" height="1.2" fill="#8a8a8a" />
<rect x="1690" y="139" width="1" height="3" fill="#8a8a8a" />
<rect x="1699" y="140" width="1" height="1.2" fill="#8a8a8a" />
<rect x="1709" y="139" width="1" height="3" fill="#8a8a8a" />
<rect x="1718" y="140" width="1" height="1.2" fill="#8a8a8a" />
<text class="s" x="1727.8" y="144.3" fill="#a0a0a0" font-size="10.5" text-anchor="middle">4</text>
<rect x="1728" y="133.8" width="1" height="1" fill="#8a8a8a" />
<rect x="1728" y="148" width="1" height="1" fill="#8a8a8a" />
<rect x="1737" y="140" width="1" height="1.2" fill="#8a8a8a" />
<rect x="1747" y="139" width="1" height="3" fill="#8a8a8a" />
<rect x="1757" y="140" width="1" height="1.2" fill="#8a8a8a" />
<rect x="1766" y="139" width="1" height="3" fill="#8a8a8a" />
<rect x="1776" y="140" width="1" height="1.2" fill="#8a8a8a" />
<rect x="1785" y="139" width="1" height="3" fill="#8a8a8a" />
<rect x="1795" y="140" width="1" height="1.2" fill="#8a8a8a" />
<rect x="1804" y="137" width="1" height="6" fill="#8a8a8a" />
<rect x="1814" y="140" width="1" height="1.2" fill="#8a8a8a" />
<rect x="1824" y="139" width="1" height="3" fill="#8a8a8a" />
<rect x="1833" y="140" width="1" height="1.2" fill="#8a8a8a" />
<rect x="1843" y="139" width="1" height="3" fill="#8a8a8a" />
<rect x="1852" y="140" width="1" height="1.2" fill="#8a8a8a" />
<rect x="1862" y="139" width="1" height="3" fill="#8a8a8a" />
<rect x="1871" y="140" width="1" height="1.2" fill="#8a8a8a" />
<text class="s" x="1881.0" y="144.3" fill="#a0a0a0" font-size="10.5" text-anchor="middle">5</text>
<rect x="1881" y="133.8" width="1" height="1" fill="#8a8a8a" />
<rect x="1881" y="148" width="1" height="1" fill="#8a8a8a" />
<rect x="1891" y="140" width="1" height="1.2" fill="#8a8a8a" />
<path d="M1190.5 147 L1190.5 150.5 M1188 150.5 L1193 150.5" stroke="#9a9a9a" stroke-width="1"/>
<path d="M1266.5 147 L1266.5 150.5 M1264 150.5 L1269 150.5" stroke="#9a9a9a" stroke-width="1"/>
<path d="M1341.5 147 L1341.5 150.5 M1339 150.5 L1344 150.5" stroke="#9a9a9a" stroke-width="1"/>
<path d="M1417.5 147 L1417.5 150.5 M1415 150.5 L1420 150.5" stroke="#9a9a9a" stroke-width="1"/>
<path d="M1492.5 147 L1492.5 150.5 M1490 150.5 L1495 150.5" stroke="#9a9a9a" stroke-width="1"/>
<path d="M1568.5 147 L1568.5 150.5 M1566 150.5 L1571 150.5" stroke="#9a9a9a" stroke-width="1"/>
<path d="M1643.5 147 L1643.5 150.5 M1641 150.5 L1646 150.5" stroke="#9a9a9a" stroke-width="1"/>
<path d="M1719.5 147 L1719.5 150.5 M1717 150.5 L1722 150.5" stroke="#9a9a9a" stroke-width="1"/>
<path d="M1794.5 147 L1794.5 150.5 M1792 150.5 L1797 150.5" stroke="#9a9a9a" stroke-width="1"/>
<path d="M1870.5 147 L1870.5 150.5 M1868 150.5 L1873 150.5" stroke="#9a9a9a" stroke-width="1"/>
<path d="M1107.5 134.5 L1119.5 134.5 L1113.5 142 L1119.5 149.5 L1107.5 149.5 L1113.5 142 Z" fill="#333" stroke="#9a9a9a" stroke-width="1"/>
<rect x="993" y="185" width="904" height="818" fill="#ffffff" />
<defs><linearGradient id="shl" x1="0" x2="1"><stop offset="0" stop-color="#353535"/><stop offset="1" stop-color="#222"/></linearGradient><linearGradient id="sht" x1="0" x2="0" y1="0" y2="1"><stop offset="0" stop-color="#353535"/><stop offset="1" stop-color="#2a2a2a"/></linearGradient></defs>
<rect x="986" y="185" width="7" height="818" fill="url(#shl)" />
<rect x="1114" y="285" width="1.2" height="22" fill="#c8c8c8" />
<rect x="1093.5" y="306" width="21.5" height="1.2" fill="#c8c8c8" />
<rect x="1897" y="1003" width="0" height="0" fill="#000" />
<rect x="993" y="1003" width="904" height="11" fill="#2f2f2f" />
<rect x="1897" y="130" width="23" height="885" fill="#353535" />
<rect x="1900" y="135" width="6" height="415" fill="#a6a6a6" rx="3"/>
<rect x="1909" y="130" width="2" height="885" fill="#777777" />
<rect x="1909" y="130" width="7" height="2" fill="#777777" />
<rect x="1909" y="1013" width="7" height="2" fill="#777777" />
<rect x="1909" y="535" width="7" height="74" fill="#8f8f8f" />
<path d="M1915 568 L1910 572.5 L1915 577 Z" fill="#333"/>
<rect x="1008.5" y="1017.5" width="247" height="33" rx="5" fill="#2b2b2b" stroke="#1c1c1c"/>
<rect x="1531.5" y="1017.5" width="149" height="33" rx="5" fill="#2b2b2b" stroke="#1c1c1c"/>
<path d="M1658.5 1032.5 L1667.5 1032.5 L1663 1037.5 Z" fill="#f0f0f0"/>
<path d="M1697 1027 L1705 1035 L1700 1035 L1700 1043 L1694 1043 L1694 1035 L1689 1035 Z" fill="#6a6a6a"/>
<path d="M1730 1043 L1738 1035 L1733 1035 L1733 1027 L1727 1027 L1727 1035 L1722 1035 Z" fill="#6a6a6a"/>
<rect x="1751" y="1020" width="1" height="30" fill="#2c2c2c" />
<rect x="1486" y="1040" width="1" height="10" fill="#2c2c2c" />
<rect x="1527" y="1040" width="1" height="10" fill="#2c2c2c" />
<rect x="1502" y="1043" width="3" height="2" fill="#e8d040" />
<circle cx="991" cy="1040" r="5" fill="#cc3333"/>
<rect x="963" y="1054" width="954" height="1" fill="#6e6e6e" />
<text class="s" x="973" y="1070" fill="#e0e0e0" font-size="13" textLength="67" lengthAdjust="spacingAndGlyphs">Page 1 of 1</text>
<rect x="1064" y="1058" width="1" height="19" fill="#2c2c2c" />
<text class="s" x="1073" y="1070" fill="#e0e0e0" font-size="13" textLength="131" lengthAdjust="spacingAndGlyphs">0 words, 0 characters</text>
<rect x="1227" y="1058" width="1" height="19" fill="#2c2c2c" />
<text class="s" x="1236" y="1070" fill="#e0e0e0" font-size="13" textLength="78" lengthAdjust="spacingAndGlyphs">Default Style</text>
<rect x="1335" y="1058" width="1" height="19" fill="#2c2c2c" />
<text class="s" x="1352" y="1070" fill="#e0e0e0" font-size="13" textLength="82" lengthAdjust="spacingAndGlyphs">English (USA)</text>
<rect x="1446" y="1058" width="1" height="19" fill="#2c2c2c" />
<path d="M1525 1060 L1529 1060 M1527 1060 L1527 1072 M1525 1072 L1529 1072 M1532 1071 L1537 1071 M1532 1069 L1532 1071 M1537 1069 L1537 1071" stroke="#9a9a9a" stroke-width="1.1" fill="none"/>
<rect x="1517" y="1058" width="1" height="19" fill="#2c2c2c" />
<rect x="1546" y="1058" width="1" height="19" fill="#2c2c2c" />
<rect x="1555" y="1060" width="12" height="10" fill="#e0e0e0" />
<path d="M1561 1061 L1561 1067 M1558 1064 L1561 1068 L1564 1064" stroke="#555" stroke-width="1.2" fill="none"/>
<rect x="1575" y="1058" width="1" height="19" fill="#2c2c2c" />
<rect x="1604" y="1058" width="1" height="19" fill="#2c2c2c" />
<rect x="1645" y="1058" width="1" height="19" fill="#2c2c2c" />
<path d="M1659.5 1060.5 L1665 1060.5 L1667.5 1063 L1667.5 1070.5 L1659.5 1070.5 Z" stroke="#aaaaaa" fill="none" stroke-width="1"/>
<path d="M1671.5 1060.5 L1677 1060.5 L1679.5 1063 L1679.5 1070.5 L1671.5 1070.5 Z M1681.5 1060.5 L1687 1060.5 L1689.5 1063 L1689.5 1070.5 L1681.5 1070.5 Z" stroke="#e07a10" fill="none" stroke-width="1.2"/>
<path d="M1696.5 1070.5 L1696.5 1063 Q1696.5 1060.5 1699 1060.5 L1703.5 1060.5 L1703.5 1070.5 Z M1703.5 1060.5 L1708 1060.5 Q1710.5 1060.5 1710.5 1063 L1710.5 1070.5 L1703.5 1070.5" stroke="#aaaaaa" fill="none" stroke-width="1"/>
<rect x="1720" y="1058" width="1" height="19" fill="#2c2c2c" />
<rect x="1733" y="1065" width="9" height="1.2" fill="#9a9a9a" />
<rect x="1746" y="1065" width="97" height="1.5" fill="#a0a0a0" />
<rect x="1766" y="1062" width="1.5" height="6" fill="#a0a0a0" />
<rect x="1779" y="1062" width="1.5" height="6" fill="#a0a0a0" />
<circle cx="1798" cy="1065.5" r="4.5" fill="#e6e6e6"/>
<rect x="1848" y="1065" width="10" height="1.2" fill="#9a9a9a" />
<rect x="1852.4" y="1060.5" width="1.2" height="10" fill="#9a9a9a" />
<rect x="1864" y="1058" width="1" height="19" fill="#2c2c2c" />
<text class="s" x="1873" y="1070" fill="#e0e0e0" font-size="13" textLength="35" lengthAdjust="spacingAndGlyphs">160%</text>
<rect x="549" y="545" width="1106" height="498" fill="#00c8ff" />
<rect x="552" y="548" width="1100" height="492" fill="#1d1f21" />
<text x="552" y="564" fill="#b5bd68" font-size="20" textLength="110" lengthAdjust="spacingAndGlyphs">matebookd15</text>
<text x="672" y="564" fill="#c5c8c6" font-size="20" textLength="10" lengthAdjust="spacingAndGlyphs">~</text>
<text x="692" y="564" fill="#c5c8c6" font-size="20" textLength="10" lengthAdjust="spacingAndGlyphs">»</text>
<text x="712" y="564" fill="#c5c8c6" font-size="20" textLength="80" lengthAdjust="spacingAndGlyphs">neofetch</text>
<text x="672" y="585" fill="#cc6666" font-size="20" font-weight="bold" textLength="160" lengthAdjust="spacingAndGlyphs">.-/+oossssoo+/-.</text>
<text x="632" y="606" fill="#cc6666" font-size="20" font-weight="bold" textLength="240" lengthAdjust="spacingAndGlyphs">`:+ssssssssssssssssss+:`</text>
<text x="612" y="627" fill="#cc6666" font-size="20" font-weight="bold" textLength="280" lengthAdjust="spacingAndGlyphs">-+ssssssssssssssssssyyssss+-</text>
<text x="592" y="648" fill="#cc6666" font-size="20" font-weight="bold" textLength="200" lengthAdjust="spacingAndGlyphs">.ossssssssssssssssss</text>
<text x="792" y="648" fill="#c5c8c6" font-size="20" font-weight="bold" textLength="60" lengthAdjust="spacingAndGlyphs">dMMMNy</text>
<text x="852" y="648" fill="#cc6666" font-size="20" font-weight="bold" textLength="60" lengthAdjust="spacingAndGlyphs">sssso.</text>
<text x="582" y="669" fill="#cc6666" font-size="20" font-weight="bold" textLength="120" lengthAdjust="spacingAndGlyphs">/sssssssssss</text>
<text x="702" y="669" fill="#c5c8c6" font-size="20" font-weight="bold" textLength="150" lengthAdjust="spacingAndGlyphs">hdmmNNmmyNMMMMh</text>
<text x="852" y="669" fill="#cc6666" font-size="20" font-weight="bold" textLength="70" lengthAdjust="spacingAndGlyphs">ssssss/</text>
<text x="572" y="690" fill="#cc6666" font-size="20" font-weight="bold" textLength="100" lengthAdjust="spacingAndGlyphs">+sssssssss</text>
<text x="672" y="690" fill="#c5c8c6" font-size="20" font-weight="bold" textLength="20" lengthAdjust="spacingAndGlyphs">hm</text>
<text x="692" y="690" fill="#cc6666" font-size="20" font-weight="bold" textLength="20" lengthAdjust="spacingAndGlyphs">yd</text>
<text x="712" y="690" fill="#c5c8c6" font-size="20" font-weight="bold" textLength="130" lengthAdjust="spacingAndGlyphs">MMMMMMMNddddy</text>
<text x="842" y="690" fill="#cc6666" font-size="20" font-weight="bold" textLength="90" lengthAdjust="spacingAndGlyphs">ssssssss+</text>
<text x="562" y="711" fill="#cc6666" font-size="20" font-weight="bold" textLength="90" lengthAdjust="spacingAndGlyphs">/ssssssss</text>
<text x="652" y="711" fill="#c5c8c6" font-size="20" font-weight="bold" textLength="50" lengthAdjust="spacingAndGlyphs">hNMMM</text>
<text x="702" y="711" fill="#cc6666" font-size="20" font-weight="bold" textLength="20" lengthAdjust="spacingAndGlyphs">yh</text>
<text x="722" y="711" fill="#c5c8c6" font-size="20" font-weight="bold" textLength="130" lengthAdjust="spacingAndGlyphs">hyyyyhmNMMMNh</text>
<text x="852" y="711" fill="#cc6666" font-size="20" font-weight="bold" textLength="90" lengthAdjust="spacingAndGlyphs">ssssssss/</text>
<text x="552" y="732" fill="#cc6666" font-size="20" font-weight="bold" textLength="90" lengthAdjust="spacingAndGlyphs">.ssssssss</text>
<text x="642" y="732" fill="#c5c8c6" font-size="20" font-weight="bold" textLength="60" lengthAdjust="spacingAndGlyphs">dMMMNh</text>
<text x="702" y="732" fill="#cc6666" font-size="20" font-weight="bold" textLength="100" lengthAdjust="spacingAndGlyphs">ssssssssss</text>
<text x="802" y="732" fill="#c5c8c6" font-size="20" font-weight="bold" textLength="60" lengthAdjust="spacingAndGlyphs">hNMMMd</text>
<text x="862" y="732" fill="#cc6666" font-size="20" font-weight="bold" textLength="90" lengthAdjust="spacingAndGlyphs">ssssssss.</text>
<text x="552" y="753" fill="#cc6666" font-size="20" font-weight="bold" textLength="50" lengthAdjust="spacingAndGlyphs">+ssss</text>
<text x="602" y="753" fill="#c5c8c6" font-size="20" font-weight="bold" textLength="90" lengthAdjust="spacingAndGlyphs">hhhyNMMNy</text>
<text x="692" y="753" fill="#cc6666" font-size="20" font-weight="bold" textLength="120" lengthAdjust="spacingAndGlyphs">ssssssssssss</text>
<text x="812" y="753" fill="#c5c8c6" font-size="20" font-weight="bold" textLength="60" lengthAdjust="spacingAndGlyphs">yNMMMy</text>
<text x="872" y="753" fill="#cc6666" font-size="20" font-weight="bold" textLength="80" lengthAdjust="spacingAndGlyphs">sssssss+</text>
<text x="552" y="774" fill="#cc6666" font-size="20" font-weight="bold" textLength="30" lengthAdjust="spacingAndGlyphs">oss</text>
<text x="582" y="774" fill="#c5c8c6" font-size="20" font-weight="bold" textLength="100" lengthAdjust="spacingAndGlyphs">yNMMMNyMMh</text>
<text x="682" y="774" fill="#cc6666" font-size="20" font-weight="bold" textLength="140" lengthAdjust="spacingAndGlyphs">ssssssssssssss</text>
<text x="822" y="774" fill="#c5c8c6" font-size="20" font-weight="bold" textLength="50" lengthAdjust="spacingAndGlyphs">hmmmh</text>
<text x="872" y="774" fill="#cc6666" font-size="20" font-weight="bold" textLength="80" lengthAdjust="spacingAndGlyphs">ssssssso</text>
<text x="552" y="795" fill="#cc6666" font-size="20" font-weight="bold" textLength="30" lengthAdjust="spacingAndGlyphs">oss</text>
<text x="582" y="795" fill="#c5c8c6" font-size="20" font-weight="bold" textLength="100" lengthAdjust="spacingAndGlyphs">yNMMMNyMMh</text>
<text x="682" y="795" fill="#cc6666" font-size="20" font-weight="bold" textLength="190" lengthAdjust="spacingAndGlyphs">sssssssssssssshmmmh</text>
<text x="872" y="795" fill="#cc6666" font-size="20" font-weight="bold" textLength="80" lengthAdjust="spacingAndGlyphs">ssssssso</text>
<text x="552" y="816" fill="#cc6666" font-size="20" font-weight="bold" textLength="50" lengthAdjust="spacingAndGlyphs">+ssss</text>
<text x="602" y="816" fill="#c5c8c6" font-size="20" font-weight="bold" textLength="90" lengthAdjust="spacingAndGlyphs">hhhyNMMNy</text>
<text x="692" y="816" fill="#cc6666" font-size="20" font-weight="bold" textLength="120" lengthAdjust="spacingAndGlyphs">ssssssssssss</text>
<text x="812" y="816" fill="#c5c8c6" font-size="20" font-weight="bold" textLength="60" lengthAdjust="spacingAndGlyphs">yNMMMy</text>
<text x="872" y="816" fill="#cc6666" font-size="20" font-weight="bold" textLength="80" lengthAdjust="spacingAndGlyphs">sssssss+</text>
<text x="552" y="837" fill="#cc6666" font-size="20" font-weight="bold" textLength="90" lengthAdjust="spacingAndGlyphs">.ssssssss</text>
<text x="642" y="837" fill="#c5c8c6" font-size="20" font-weight="bold" textLength="60" lengthAdjust="spacingAndGlyphs">dMMMNh</text>
<text x="702" y="837" fill="#cc6666" font-size="20" font-weight="bold" textLength="100" lengthAdjust="spacingAndGlyphs">ssssssssss</text>
<text x="802" y="837" fill="#c5c8c6" font-size="20" font-weight="bold" textLength="60" lengthAdjust="spacingAndGlyphs">hNMMMd</text>
<text x="862" y="837" fill="#cc6666" font-size="20" font-weight="bold" textLength="90" lengthAdjust="spacingAndGlyphs">ssssssss.</text>
<text x="562" y="858" fill="#cc6666" font-size="20" font-weight="bold" textLength="90" lengthAdjust="spacingAndGlyphs">/ssssssss</text>
<text x="652" y="858" fill="#c5c8c6" font-size="20" font-weight="bold" textLength="50" lengthAdjust="spacingAndGlyphs">hNMMM</text>
<text x="702" y="858" fill="#cc6666" font-size="20" font-weight="bold" textLength="20" lengthAdjust="spacingAndGlyphs">yh</text>
<text x="722" y="858" fill="#c5c8c6" font-size="20" font-weight="bold" textLength="130" lengthAdjust="spacingAndGlyphs">hyyyyhdNMMMNh</text>
<text x="852" y="858" fill="#cc6666" font-size="20" font-weight="bold" textLength="90" lengthAdjust="spacingAndGlyphs">ssssssss/</text>
<text x="572" y="879" fill="#cc6666" font-size="20" font-weight="bold" textLength="100" lengthAdjust="spacingAndGlyphs">+sssssssss</text>
<text x="672" y="879" fill="#c5c8c6" font-size="20" font-weight="bold" textLength="20" lengthAdjust="spacingAndGlyphs">dm</text>
<text x="692" y="879" fill="#cc6666" font-size="20" font-weight="bold" textLength="20" lengthAdjust="spacingAndGlyphs">yd</text>
<text x="712" y="879" fill="#c5c8c6" font-size="20" font-weight="bold" textLength="130" lengthAdjust="spacingAndGlyphs">MMMMMMMMddddy</text>
<text x="842" y="879" fill="#cc6666" font-size="20" font-weight="bold" textLength="90" lengthAdjust="spacingAndGlyphs">ssssssss+</text>
<text x="582" y="900" fill="#cc6666" font-size="20" font-weight="bold" textLength="120" lengthAdjust="spacingAndGlyphs">/sssssssssss</text>
<text x="702" y="900" fill="#c5c8c6" font-size="20" font-weight="bold" textLength="150" lengthAdjust="spacingAndGlyphs">hdmNNNNmyNMMMMh</text>
<text x="852" y="900" fill="#cc6666" font-size="20" font-weight="bold" textLength="70" lengthAdjust="spacingAndGlyphs">ssssss/</text>
<text x="592" y="921" fill="#cc6666" font-size="20" font-weight="bold" textLength="200" lengthAdjust="spacingAndGlyphs">.ossssssssssssssssss</text>
<text x="792" y="921" fill="#c5c8c6" font-size="20" font-weight="bold" textLength="60" lengthAdjust="spacingAndGlyphs">dMMMNy</text>
<text x="852" y="921" fill="#cc6666" font-size="20" font-weight="bold" textLength="60" lengthAdjust="spacingAndGlyphs">sssso.</text>
<text x="612" y="942" fill="#cc6666" font-size="20" font-weight="bold" textLength="190" lengthAdjust="spacingAndGlyphs">-+sssssssssssssssss</text>
<text x="802" y="942" fill="#c5c8c6" font-size="20" font-weight="bold" textLength="30" lengthAdjust="spacingAndGlyphs">yyy</text>
<text x="832" y="942" fill="#cc6666" font-size="20" font-weight="bold" textLength="60" lengthAdjust="spacingAndGlyphs">ssss+-</text>
<text x="632" y="963" fill="#cc6666" font-size="20" font-weight="bold" textLength="240" lengthAdjust="spacingAndGlyphs">`:+ssssssssssssssssss+:`</text>
<text x="672" y="984" fill="#cc6666" font-size="20" font-weight="bold" textLength="160" lengthAdjust="spacingAndGlyphs">.-/+oossssoo+/-.</text>
<text x="982" y="585" fill="#cc6666" font-size="20" font-weight="bold" textLength="80" lengthAdjust="spacingAndGlyphs">sglavoie</text>
<text x="1062" y="585" fill="#c5c8c6" font-size="20" textLength="10" lengthAdjust="spacingAndGlyphs">@</text>
<text x="1072" y="585" fill="#cc6666" font-size="20" font-weight="bold" textLength="110" lengthAdjust="spacingAndGlyphs">matebookd15</text>
<text x="982" y="606" fill="#c5c8c6" font-size="20" textLength="200" lengthAdjust="spacingAndGlyphs">--------------------</text>
<text x="982" y="627" fill="#cc6666" font-size="20" font-weight="bold" textLength="20" lengthAdjust="spacingAndGlyphs">OS</text>
<text x="1002" y="627" fill="#c5c8c6" font-size="20" textLength="10" lengthAdjust="spacingAndGlyphs">:</text>
<text x="1022" y="627" fill="#c5c8c6" font-size="20" textLength="60" lengthAdjust="spacingAndGlyphs">Ubuntu</text>
<text x="1092" y="627" fill="#c5c8c6" font-size="20" textLength="70" lengthAdjust="spacingAndGlyphs">20.04.1</text>
<text x="1172" y="627" fill="#c5c8c6" font-size="20" textLength="30" lengthAdjust="spacingAndGlyphs">LTS</text>
<text x="1212" y="627" fill="#c5c8c6" font-size="20" textLength="60" lengthAdjust="spacingAndGlyphs">x86_64</text>
<text x="982" y="648" fill="#cc6666" font-size="20" font-weight="bold" textLength="40" lengthAdjust="spacingAndGlyphs">Host</text>
<text x="1022" y="648" fill="#c5c8c6" font-size="20" textLength="10" lengthAdjust="spacingAndGlyphs">:</text>
<text x="1042" y="648" fill="#c5c8c6" font-size="20" textLength="100" lengthAdjust="spacingAndGlyphs">BOHK-WAX9X</text>
<text x="1152" y="648" fill="#c5c8c6" font-size="20" textLength="50" lengthAdjust="spacingAndGlyphs">M1010</text>
<text x="982" y="669" fill="#cc6666" font-size="20" font-weight="bold" textLength="60" lengthAdjust="spacingAndGlyphs">Kernel</text>
<text x="1042" y="669" fill="#c5c8c6" font-size="20" textLength="10" lengthAdjust="spacingAndGlyphs">:</text>
<text x="1062" y="669" fill="#c5c8c6" font-size="20" textLength="160" lengthAdjust="spacingAndGlyphs">5.4.0-42-generic</text>
<text x="982" y="690" fill="#cc6666" font-size="20" font-weight="bold" textLength="60" lengthAdjust="spacingAndGlyphs">Uptime</text>
<text x="1042" y="690" fill="#c5c8c6" font-size="20" textLength="10" lengthAdjust="spacingAndGlyphs">:</text>
<text x="1062" y="690" fill="#c5c8c6" font-size="20" textLength="10" lengthAdjust="spacingAndGlyphs">5</text>
<text x="1082" y="690" fill="#c5c8c6" font-size="20" textLength="60" lengthAdjust="spacingAndGlyphs">hours,</text>
<text x="1152" y="690" fill="#c5c8c6" font-size="20" textLength="10" lengthAdjust="spacingAndGlyphs">9</text>
<text x="1172" y="690" fill="#c5c8c6" font-size="20" textLength="40" lengthAdjust="spacingAndGlyphs">mins</text>
<text x="982" y="711" fill="#cc6666" font-size="20" font-weight="bold" textLength="80" lengthAdjust="spacingAndGlyphs">Packages</text>
<text x="1062" y="711" fill="#c5c8c6" font-size="20" textLength="10" lengthAdjust="spacingAndGlyphs">:</text>
<text x="1082" y="711" fill="#c5c8c6" font-size="20" textLength="40" lengthAdjust="spacingAndGlyphs">2624</text>
<text x="1132" y="711" fill="#c5c8c6" font-size="20" textLength="70" lengthAdjust="spacingAndGlyphs">(dpkg),</text>
<text x="1212" y="711" fill="#c5c8c6" font-size="20" textLength="10" lengthAdjust="spacingAndGlyphs">7</text>
<text x="1232" y="711" fill="#c5c8c6" font-size="20" textLength="60" lengthAdjust="spacingAndGlyphs">(snap)</text>
<text x="982" y="732" fill="#cc6666" font-size="20" font-weight="bold" textLength="50" lengthAdjust="spacingAndGlyphs">Shell</text>
<text x="1032" y="732" fill="#c5c8c6" font-size="20" textLength="10" lengthAdjust="spacingAndGlyphs">:</text>
<text x="1052" y="732" fill="#c5c8c6" font-size="20" textLength="30" lengthAdjust="spacingAndGlyphs">zsh</text>
<text x="1092" y="732" fill="#c5c8c6" font-size="20" textLength="30" lengthAdjust="spacingAndGlyphs">5.8</text>
<text x="982" y="753" fill="#cc6666" font-size="20" font-weight="bold" textLength="100" lengthAdjust="spacingAndGlyphs">Resolution</text>
<text x="1082" y="753" fill="#c5c8c6" font-size="20" textLength="10" lengthAdjust="spacingAndGlyphs">:</text>
<text x="1102" y="753" fill="#c5c8c6" font-size="20" textLength="100" lengthAdjust="spacingAndGlyphs">1920x1080,</text>
<text x="1212" y="753" fill="#c5c8c6" font-size="20" textLength="90" lengthAdjust="spacingAndGlyphs">1920x1080</text>
<text x="982" y="774" fill="#cc6666" font-size="20" font-weight="bold" textLength="20" lengthAdjust="spacingAndGlyphs">WM</text>
<text x="1002" y="774" fill="#c5c8c6" font-size="20" textLength="10" lengthAdjust="spacingAndGlyphs">:</text>
<text x="1022" y="774" fill="#c5c8c6" font-size="20" textLength="20" lengthAdjust="spacingAndGlyphs">i3</text>
<text x="982" y="795" fill="#cc6666" font-size="20" font-weight="bold" textLength="50" lengthAdjust="spacingAndGlyphs">Theme</text>
<text x="1032" y="795" fill="#c5c8c6" font-size="20" textLength="10" lengthAdjust="spacingAndGlyphs">:</text>
<text x="1052" y="795" fill="#c5c8c6" font-size="20" textLength="120" lengthAdjust="spacingAndGlyphs">Adwaita-dark</text>
<text x="1182" y="795" fill="#c5c8c6" font-size="20" textLength="80" lengthAdjust="spacingAndGlyphs">[GTK2/3]</text>
<text x="982" y="816" fill="#cc6666" font-size="20" font-weight="bold" textLength="50" lengthAdjust="spacingAndGlyphs">Icons</text>
<text x="1032" y="816" fill="#c5c8c6" font-size="20" textLength="10" lengthAdjust="spacingAndGlyphs">:</text>
<text x="1052" y="816" fill="#c5c8c6" font-size="20" textLength="150" lengthAdjust="spacingAndGlyphs">elementary-xfce</text>
<text x="1212" y="816" fill="#c5c8c6" font-size="20" textLength="80" lengthAdjust="spacingAndGlyphs">[GTK2/3]</text>
<text x="982" y="837" fill="#cc6666" font-size="20" font-weight="bold" textLength="80" lengthAdjust="spacingAndGlyphs">Terminal</text>
<text x="1062" y="837" fill="#c5c8c6" font-size="20" textLength="10" lengthAdjust="spacingAndGlyphs">:</text>
<text x="1082" y="837" fill="#c5c8c6" font-size="20" textLength="90" lengthAdjust="spacingAndGlyphs">alacritty</text>
<text x="982" y="858" fill="#cc6666" font-size="20" font-weight="bold" textLength="30" lengthAdjust="spacingAndGlyphs">CPU</text>
<text x="1012" y="858" fill="#c5c8c6" font-size="20" textLength="10" lengthAdjust="spacingAndGlyphs">:</text>
<text x="1032" y="858" fill="#c5c8c6" font-size="20" textLength="30" lengthAdjust="spacingAndGlyphs">AMD</text>
<text x="1072" y="858" fill="#c5c8c6" font-size="20" textLength="50" lengthAdjust="spacingAndGlyphs">Ryzen</text>
<text x="1132" y="858" fill="#c5c8c6" font-size="20" textLength="10" lengthAdjust="spacingAndGlyphs">5</text>
<text x="1152" y="858" fill="#c5c8c6" font-size="20" textLength="50" lengthAdjust="spacingAndGlyphs">3500U</text>
<text x="1212" y="858" fill="#c5c8c6" font-size="20" textLength="40" lengthAdjust="spacingAndGlyphs">with</text>
<text x="1262" y="858" fill="#c5c8c6" font-size="20" textLength="60" lengthAdjust="spacingAndGlyphs">Radeon</text>
<text x="1332" y="858" fill="#c5c8c6" font-size="20" textLength="40" lengthAdjust="spacingAndGlyphs">Vega</text>
<text x="1382" y="858" fill="#c5c8c6" font-size="20" textLength="60" lengthAdjust="spacingAndGlyphs">Mobile</text>
<text x="1452" y="858" fill="#c5c8c6" font-size="20" textLength="30" lengthAdjust="spacingAndGlyphs">Gfx</text>
<text x="1492" y="858" fill="#c5c8c6" font-size="20" textLength="30" lengthAdjust="spacingAndGlyphs">(8)</text>
<text x="1532" y="858" fill="#c5c8c6" font-size="20" textLength="10" lengthAdjust="spacingAndGlyphs">@</text>
<text x="1552" y="858" fill="#c5c8c6" font-size="20" textLength="80" lengthAdjust="spacingAndGlyphs">2.100GHz</text>
<text x="982" y="879" fill="#cc6666" font-size="20" font-weight="bold" textLength="30" lengthAdjust="spacingAndGlyphs">GPU</text>
<text x="1012" y="879" fill="#c5c8c6" font-size="20" textLength="10" lengthAdjust="spacingAndGlyphs">:</text>
<text x="1032" y="879" fill="#c5c8c6" font-size="20" textLength="30" lengthAdjust="spacingAndGlyphs">AMD</text>
<text x="1072" y="879" fill="#c5c8c6" font-size="20" textLength="30" lengthAdjust="spacingAndGlyphs">ATI</text>
<text x="1112" y="879" fill="#c5c8c6" font-size="20" textLength="70" lengthAdjust="spacingAndGlyphs">03:00.0</text>
<text x="1192" y="879" fill="#c5c8c6" font-size="20" textLength="70" lengthAdjust="spacingAndGlyphs">Picasso</text>
<text x="982" y="900" fill="#cc6666" font-size="20" font-weight="bold" textLength="60" lengthAdjust="spacingAndGlyphs">Memory</text>
<text x="1042" y="900" fill="#c5c8c6" font-size="20" textLength="10" lengthAdjust="spacingAndGlyphs">:</text>
<text x="1062" y="900" fill="#c5c8c6" font-size="20" textLength="70" lengthAdjust="spacingAndGlyphs">1492MiB</text>
<text x="1142" y="900" fill="#c5c8c6" font-size="20" textLength="10" lengthAdjust="spacingAndGlyphs">/</text>
<text x="1162" y="900" fill="#c5c8c6" font-size="20" textLength="70" lengthAdjust="spacingAndGlyphs">6951MiB</text>
<rect x="1012" y="926" width="30" height="21" fill="#cc6666" />
<rect x="1042" y="926" width="30" height="21" fill="#b5bd68" />
<rect x="1072" y="926" width="30" height="21" fill="#f0c674" />
<rect x="1102" y="926" width="30" height="21" fill="#81a2be" />
<rect x="1132" y="926" width="30" height="21" fill="#b294bb" />
<rect x="1162" y="926" width="30" height="21" fill="#8abeb7" />
<rect x="1192" y="926" width="30" height="21" fill="#c5c8c6" />
<rect x="982" y="947" width="30" height="21" fill="#666666" />
<rect x="1012" y="947" width="30" height="21" fill="#d54e53" />
<rect x="1042" y="947" width="30" height="21" fill="#b9ca4a" />
<rect x="1072" y="947" width="30" height="21" fill="#e7c547" />
<rect x="1102" y="947" width="30" height="21" fill="#7aa6da" />
<rect x="1132" y="947" width="30" height="21" fill="#c397d8" />
<rect x="1162" y="947" width="30" height="21" fill="#70c0b1" />
<rect x="1192" y="947" width="30" height="21" fill="#eaeaea" />
<text x="552" y="1026" fill="#b5bd68" font-size="20" textLength="110" lengthAdjust="spacingAndGlyphs">matebookd15</text>
<text x="672" y="1026" fill="#c5c8c6" font-size="20" textLength="10" lengthAdjust="spacingAndGlyphs">~</text>
<text x="692" y="1026" fill="#c5c8c6" font-size="20" textLength="10" lengthAdjust="spacingAndGlyphs">»</text>
<rect x="712" y="1010" width="10" height="21" fill="#c5c8c6" />
</svg></body></html>
